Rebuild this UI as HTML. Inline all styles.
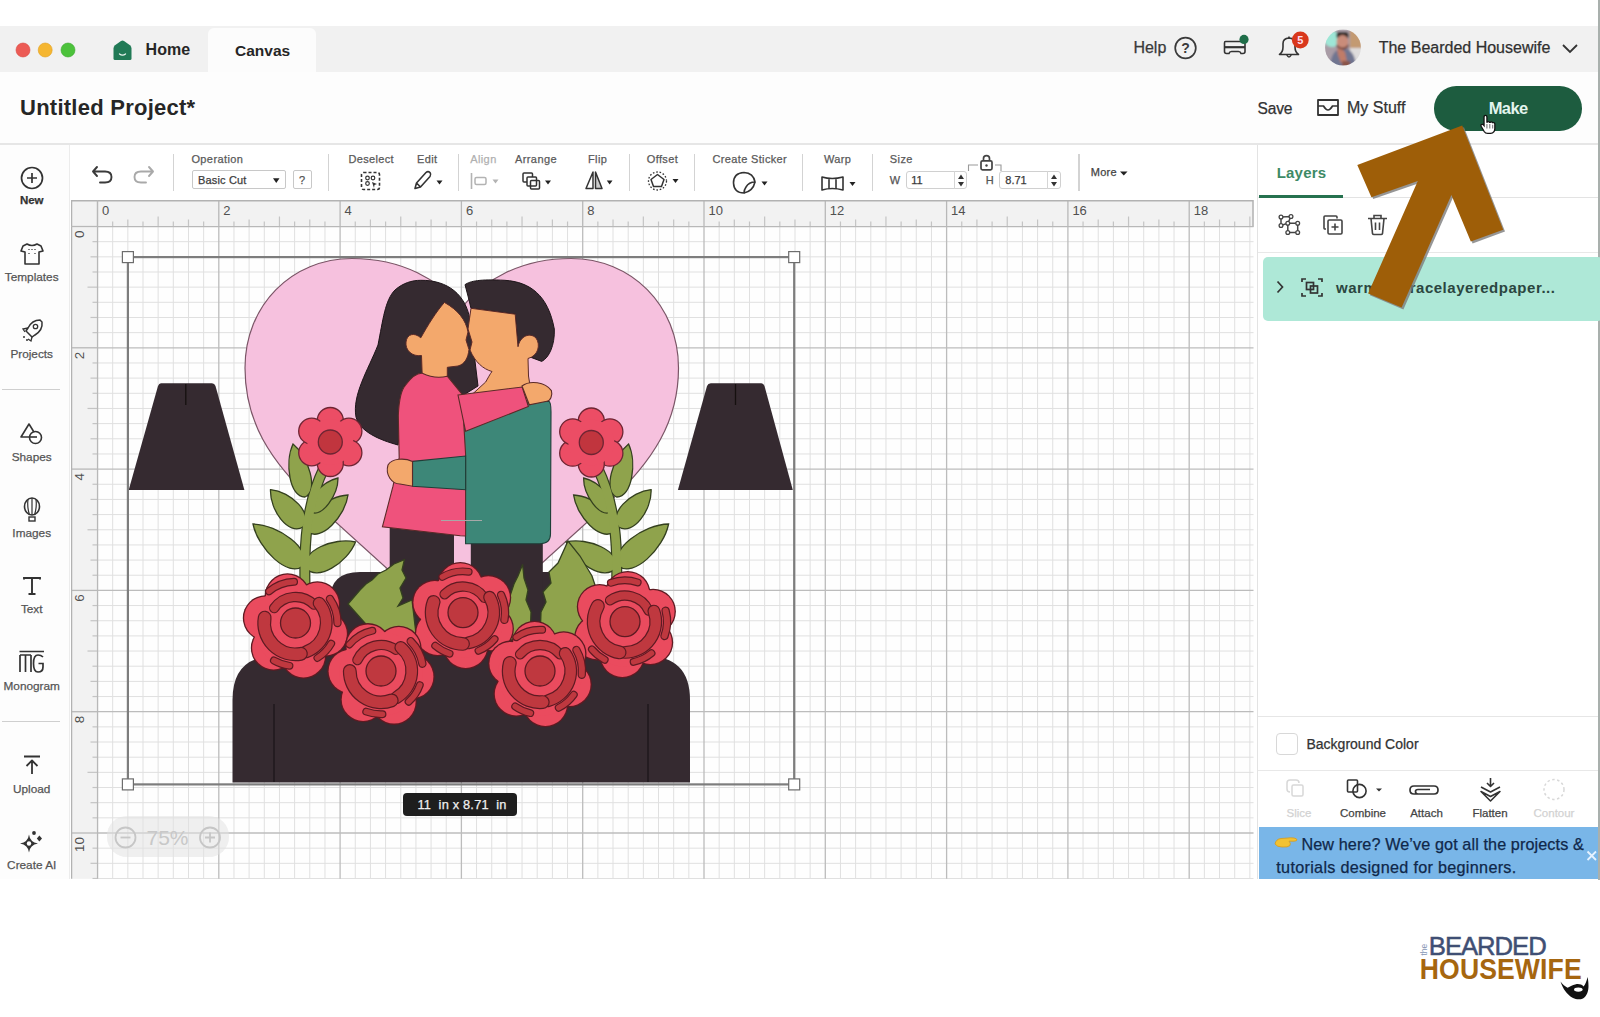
<!DOCTYPE html>
<html><head><meta charset="utf-8">
<style>
*{margin:0;padding:0;box-sizing:border-box}
html,body{width:1600px;height:1017px;overflow:hidden;background:#fff;font-family:"Liberation Sans",sans-serif;color:#2b2b2b}
.a{position:absolute}
#tabbar{left:0;top:26px;width:1598px;height:46px;background:#f1f1f1}
#canvastab{left:208px;top:28px;width:108px;height:44px;background:#fcfcfc;border-radius:6px 6px 0 0}
#header{left:0;top:72px;width:1598px;height:73px;background:#fdfdfd;border-bottom:2px solid #e6e6e6}
#sidebar{left:0;top:145px;width:70px;height:734px;background:#fdfdfd;border-right:1px solid #ececec}
#toolbar{left:71px;top:145px;width:1186px;height:55px;background:#fff}
#rpanel{left:1257px;top:145px;width:341px;height:734px;background:#fff;border-left:1px solid #e3e3e3}
#rightline{left:1598px;top:0;width:2px;height:880px;background:#a9b0ad}
.t{position:absolute;white-space:nowrap;line-height:1;-webkit-text-stroke:0.25px currentColor}
</style></head><body>
<div class="a" id="tabbar"></div>
<div class="a" id="canvastab"></div>
<div class="a" id="header"></div>
<div class="a" id="sidebar"></div>
<div class="a" id="toolbar"></div>
<div class="a" id="rpanel"></div>
<div class="a" id="rightline"></div>

<!-- CANVAS -->
<svg class="a" style="left:71px;top:200px" width="1186" height="679" viewBox="71 200 1186 679" id="canvas">
<rect x="97.5" y="226.5" width="1156.0" height="652.3" fill="#fefefe"/>
<line x1="112.66" y1="226.5" x2="112.66" y2="878.8" stroke="#e0e0e0" stroke-width="1"/>
<line x1="127.83" y1="226.5" x2="127.83" y2="878.8" stroke="#e0e0e0" stroke-width="1"/>
<line x1="142.99" y1="226.5" x2="142.99" y2="878.8" stroke="#e0e0e0" stroke-width="1"/>
<line x1="158.15" y1="226.5" x2="158.15" y2="878.8" stroke="#e0e0e0" stroke-width="1"/>
<line x1="173.31" y1="226.5" x2="173.31" y2="878.8" stroke="#e0e0e0" stroke-width="1"/>
<line x1="188.47" y1="226.5" x2="188.47" y2="878.8" stroke="#e0e0e0" stroke-width="1"/>
<line x1="203.64" y1="226.5" x2="203.64" y2="878.8" stroke="#e0e0e0" stroke-width="1"/>
<line x1="233.96" y1="226.5" x2="233.96" y2="878.8" stroke="#e0e0e0" stroke-width="1"/>
<line x1="249.12" y1="226.5" x2="249.12" y2="878.8" stroke="#e0e0e0" stroke-width="1"/>
<line x1="264.29" y1="226.5" x2="264.29" y2="878.8" stroke="#e0e0e0" stroke-width="1"/>
<line x1="279.45" y1="226.5" x2="279.45" y2="878.8" stroke="#e0e0e0" stroke-width="1"/>
<line x1="294.61" y1="226.5" x2="294.61" y2="878.8" stroke="#e0e0e0" stroke-width="1"/>
<line x1="309.77" y1="226.5" x2="309.77" y2="878.8" stroke="#e0e0e0" stroke-width="1"/>
<line x1="324.94" y1="226.5" x2="324.94" y2="878.8" stroke="#e0e0e0" stroke-width="1"/>
<line x1="355.26" y1="226.5" x2="355.26" y2="878.8" stroke="#e0e0e0" stroke-width="1"/>
<line x1="370.43" y1="226.5" x2="370.43" y2="878.8" stroke="#e0e0e0" stroke-width="1"/>
<line x1="385.59" y1="226.5" x2="385.59" y2="878.8" stroke="#e0e0e0" stroke-width="1"/>
<line x1="400.75" y1="226.5" x2="400.75" y2="878.8" stroke="#e0e0e0" stroke-width="1"/>
<line x1="415.91" y1="226.5" x2="415.91" y2="878.8" stroke="#e0e0e0" stroke-width="1"/>
<line x1="431.07" y1="226.5" x2="431.07" y2="878.8" stroke="#e0e0e0" stroke-width="1"/>
<line x1="446.24" y1="226.5" x2="446.24" y2="878.8" stroke="#e0e0e0" stroke-width="1"/>
<line x1="476.56" y1="226.5" x2="476.56" y2="878.8" stroke="#e0e0e0" stroke-width="1"/>
<line x1="491.72" y1="226.5" x2="491.72" y2="878.8" stroke="#e0e0e0" stroke-width="1"/>
<line x1="506.89" y1="226.5" x2="506.89" y2="878.8" stroke="#e0e0e0" stroke-width="1"/>
<line x1="522.05" y1="226.5" x2="522.05" y2="878.8" stroke="#e0e0e0" stroke-width="1"/>
<line x1="537.21" y1="226.5" x2="537.21" y2="878.8" stroke="#e0e0e0" stroke-width="1"/>
<line x1="552.38" y1="226.5" x2="552.38" y2="878.8" stroke="#e0e0e0" stroke-width="1"/>
<line x1="567.54" y1="226.5" x2="567.54" y2="878.8" stroke="#e0e0e0" stroke-width="1"/>
<line x1="597.86" y1="226.5" x2="597.86" y2="878.8" stroke="#e0e0e0" stroke-width="1"/>
<line x1="613.02" y1="226.5" x2="613.02" y2="878.8" stroke="#e0e0e0" stroke-width="1"/>
<line x1="628.19" y1="226.5" x2="628.19" y2="878.8" stroke="#e0e0e0" stroke-width="1"/>
<line x1="643.35" y1="226.5" x2="643.35" y2="878.8" stroke="#e0e0e0" stroke-width="1"/>
<line x1="658.51" y1="226.5" x2="658.51" y2="878.8" stroke="#e0e0e0" stroke-width="1"/>
<line x1="673.67" y1="226.5" x2="673.67" y2="878.8" stroke="#e0e0e0" stroke-width="1"/>
<line x1="688.84" y1="226.5" x2="688.84" y2="878.8" stroke="#e0e0e0" stroke-width="1"/>
<line x1="719.16" y1="226.5" x2="719.16" y2="878.8" stroke="#e0e0e0" stroke-width="1"/>
<line x1="734.32" y1="226.5" x2="734.32" y2="878.8" stroke="#e0e0e0" stroke-width="1"/>
<line x1="749.49" y1="226.5" x2="749.49" y2="878.8" stroke="#e0e0e0" stroke-width="1"/>
<line x1="764.65" y1="226.5" x2="764.65" y2="878.8" stroke="#e0e0e0" stroke-width="1"/>
<line x1="779.81" y1="226.5" x2="779.81" y2="878.8" stroke="#e0e0e0" stroke-width="1"/>
<line x1="794.98" y1="226.5" x2="794.98" y2="878.8" stroke="#e0e0e0" stroke-width="1"/>
<line x1="810.14" y1="226.5" x2="810.14" y2="878.8" stroke="#e0e0e0" stroke-width="1"/>
<line x1="840.46" y1="226.5" x2="840.46" y2="878.8" stroke="#e0e0e0" stroke-width="1"/>
<line x1="855.62" y1="226.5" x2="855.62" y2="878.8" stroke="#e0e0e0" stroke-width="1"/>
<line x1="870.79" y1="226.5" x2="870.79" y2="878.8" stroke="#e0e0e0" stroke-width="1"/>
<line x1="885.95" y1="226.5" x2="885.95" y2="878.8" stroke="#e0e0e0" stroke-width="1"/>
<line x1="901.11" y1="226.5" x2="901.11" y2="878.8" stroke="#e0e0e0" stroke-width="1"/>
<line x1="916.27" y1="226.5" x2="916.27" y2="878.8" stroke="#e0e0e0" stroke-width="1"/>
<line x1="931.44" y1="226.5" x2="931.44" y2="878.8" stroke="#e0e0e0" stroke-width="1"/>
<line x1="961.76" y1="226.5" x2="961.76" y2="878.8" stroke="#e0e0e0" stroke-width="1"/>
<line x1="976.92" y1="226.5" x2="976.92" y2="878.8" stroke="#e0e0e0" stroke-width="1"/>
<line x1="992.09" y1="226.5" x2="992.09" y2="878.8" stroke="#e0e0e0" stroke-width="1"/>
<line x1="1007.25" y1="226.5" x2="1007.25" y2="878.8" stroke="#e0e0e0" stroke-width="1"/>
<line x1="1022.41" y1="226.5" x2="1022.41" y2="878.8" stroke="#e0e0e0" stroke-width="1"/>
<line x1="1037.57" y1="226.5" x2="1037.57" y2="878.8" stroke="#e0e0e0" stroke-width="1"/>
<line x1="1052.74" y1="226.5" x2="1052.74" y2="878.8" stroke="#e0e0e0" stroke-width="1"/>
<line x1="1083.06" y1="226.5" x2="1083.06" y2="878.8" stroke="#e0e0e0" stroke-width="1"/>
<line x1="1098.22" y1="226.5" x2="1098.22" y2="878.8" stroke="#e0e0e0" stroke-width="1"/>
<line x1="1113.39" y1="226.5" x2="1113.39" y2="878.8" stroke="#e0e0e0" stroke-width="1"/>
<line x1="1128.55" y1="226.5" x2="1128.55" y2="878.8" stroke="#e0e0e0" stroke-width="1"/>
<line x1="1143.71" y1="226.5" x2="1143.71" y2="878.8" stroke="#e0e0e0" stroke-width="1"/>
<line x1="1158.88" y1="226.5" x2="1158.88" y2="878.8" stroke="#e0e0e0" stroke-width="1"/>
<line x1="1174.04" y1="226.5" x2="1174.04" y2="878.8" stroke="#e0e0e0" stroke-width="1"/>
<line x1="1204.36" y1="226.5" x2="1204.36" y2="878.8" stroke="#e0e0e0" stroke-width="1"/>
<line x1="1219.52" y1="226.5" x2="1219.52" y2="878.8" stroke="#e0e0e0" stroke-width="1"/>
<line x1="1234.69" y1="226.5" x2="1234.69" y2="878.8" stroke="#e0e0e0" stroke-width="1"/>
<line x1="1249.85" y1="226.5" x2="1249.85" y2="878.8" stroke="#e0e0e0" stroke-width="1"/>
<line x1="97.5" y1="241.66" x2="1253.5" y2="241.66" stroke="#e0e0e0" stroke-width="1"/>
<line x1="97.5" y1="256.82" x2="1253.5" y2="256.82" stroke="#e0e0e0" stroke-width="1"/>
<line x1="97.5" y1="271.99" x2="1253.5" y2="271.99" stroke="#e0e0e0" stroke-width="1"/>
<line x1="97.5" y1="287.15" x2="1253.5" y2="287.15" stroke="#e0e0e0" stroke-width="1"/>
<line x1="97.5" y1="302.31" x2="1253.5" y2="302.31" stroke="#e0e0e0" stroke-width="1"/>
<line x1="97.5" y1="317.48" x2="1253.5" y2="317.48" stroke="#e0e0e0" stroke-width="1"/>
<line x1="97.5" y1="332.64" x2="1253.5" y2="332.64" stroke="#e0e0e0" stroke-width="1"/>
<line x1="97.5" y1="362.96" x2="1253.5" y2="362.96" stroke="#e0e0e0" stroke-width="1"/>
<line x1="97.5" y1="378.12" x2="1253.5" y2="378.12" stroke="#e0e0e0" stroke-width="1"/>
<line x1="97.5" y1="393.29" x2="1253.5" y2="393.29" stroke="#e0e0e0" stroke-width="1"/>
<line x1="97.5" y1="408.45" x2="1253.5" y2="408.45" stroke="#e0e0e0" stroke-width="1"/>
<line x1="97.5" y1="423.61" x2="1253.5" y2="423.61" stroke="#e0e0e0" stroke-width="1"/>
<line x1="97.5" y1="438.77" x2="1253.5" y2="438.77" stroke="#e0e0e0" stroke-width="1"/>
<line x1="97.5" y1="453.94" x2="1253.5" y2="453.94" stroke="#e0e0e0" stroke-width="1"/>
<line x1="97.5" y1="484.26" x2="1253.5" y2="484.26" stroke="#e0e0e0" stroke-width="1"/>
<line x1="97.5" y1="499.43" x2="1253.5" y2="499.43" stroke="#e0e0e0" stroke-width="1"/>
<line x1="97.5" y1="514.59" x2="1253.5" y2="514.59" stroke="#e0e0e0" stroke-width="1"/>
<line x1="97.5" y1="529.75" x2="1253.5" y2="529.75" stroke="#e0e0e0" stroke-width="1"/>
<line x1="97.5" y1="544.91" x2="1253.5" y2="544.91" stroke="#e0e0e0" stroke-width="1"/>
<line x1="97.5" y1="560.08" x2="1253.5" y2="560.08" stroke="#e0e0e0" stroke-width="1"/>
<line x1="97.5" y1="575.24" x2="1253.5" y2="575.24" stroke="#e0e0e0" stroke-width="1"/>
<line x1="97.5" y1="605.56" x2="1253.5" y2="605.56" stroke="#e0e0e0" stroke-width="1"/>
<line x1="97.5" y1="620.72" x2="1253.5" y2="620.72" stroke="#e0e0e0" stroke-width="1"/>
<line x1="97.5" y1="635.89" x2="1253.5" y2="635.89" stroke="#e0e0e0" stroke-width="1"/>
<line x1="97.5" y1="651.05" x2="1253.5" y2="651.05" stroke="#e0e0e0" stroke-width="1"/>
<line x1="97.5" y1="666.21" x2="1253.5" y2="666.21" stroke="#e0e0e0" stroke-width="1"/>
<line x1="97.5" y1="681.38" x2="1253.5" y2="681.38" stroke="#e0e0e0" stroke-width="1"/>
<line x1="97.5" y1="696.54" x2="1253.5" y2="696.54" stroke="#e0e0e0" stroke-width="1"/>
<line x1="97.5" y1="726.86" x2="1253.5" y2="726.86" stroke="#e0e0e0" stroke-width="1"/>
<line x1="97.5" y1="742.02" x2="1253.5" y2="742.02" stroke="#e0e0e0" stroke-width="1"/>
<line x1="97.5" y1="757.19" x2="1253.5" y2="757.19" stroke="#e0e0e0" stroke-width="1"/>
<line x1="97.5" y1="772.35" x2="1253.5" y2="772.35" stroke="#e0e0e0" stroke-width="1"/>
<line x1="97.5" y1="787.51" x2="1253.5" y2="787.51" stroke="#e0e0e0" stroke-width="1"/>
<line x1="97.5" y1="802.67" x2="1253.5" y2="802.67" stroke="#e0e0e0" stroke-width="1"/>
<line x1="97.5" y1="817.84" x2="1253.5" y2="817.84" stroke="#e0e0e0" stroke-width="1"/>
<line x1="97.5" y1="848.16" x2="1253.5" y2="848.16" stroke="#e0e0e0" stroke-width="1"/>
<line x1="97.5" y1="863.32" x2="1253.5" y2="863.32" stroke="#e0e0e0" stroke-width="1"/>
<line x1="97.5" y1="878.49" x2="1253.5" y2="878.49" stroke="#e0e0e0" stroke-width="1"/>
<line x1="97.50" y1="200" x2="97.50" y2="878.8" stroke="#bcbcbc" stroke-width="1.3"/>
<line x1="218.80" y1="200" x2="218.80" y2="878.8" stroke="#bcbcbc" stroke-width="1.3"/>
<line x1="340.10" y1="200" x2="340.10" y2="878.8" stroke="#bcbcbc" stroke-width="1.3"/>
<line x1="461.40" y1="200" x2="461.40" y2="878.8" stroke="#bcbcbc" stroke-width="1.3"/>
<line x1="582.70" y1="200" x2="582.70" y2="878.8" stroke="#bcbcbc" stroke-width="1.3"/>
<line x1="704.00" y1="200" x2="704.00" y2="878.8" stroke="#bcbcbc" stroke-width="1.3"/>
<line x1="825.30" y1="200" x2="825.30" y2="878.8" stroke="#bcbcbc" stroke-width="1.3"/>
<line x1="946.60" y1="200" x2="946.60" y2="878.8" stroke="#bcbcbc" stroke-width="1.3"/>
<line x1="1067.90" y1="200" x2="1067.90" y2="878.8" stroke="#bcbcbc" stroke-width="1.3"/>
<line x1="1189.20" y1="200" x2="1189.20" y2="878.8" stroke="#bcbcbc" stroke-width="1.3"/>
<line x1="71" y1="226.50" x2="1253.5" y2="226.50" stroke="#bcbcbc" stroke-width="1.3"/>
<line x1="71" y1="347.80" x2="1253.5" y2="347.80" stroke="#bcbcbc" stroke-width="1.3"/>
<line x1="71" y1="469.10" x2="1253.5" y2="469.10" stroke="#bcbcbc" stroke-width="1.3"/>
<line x1="71" y1="590.40" x2="1253.5" y2="590.40" stroke="#bcbcbc" stroke-width="1.3"/>
<line x1="71" y1="711.70" x2="1253.5" y2="711.70" stroke="#bcbcbc" stroke-width="1.3"/>
<line x1="71" y1="833.00" x2="1253.5" y2="833.00" stroke="#bcbcbc" stroke-width="1.3"/>

<rect x="71" y="200" width="1182.5" height="26.5" fill="#f2f2f2"/>
<rect x="71" y="226.5" width="26.5" height="652.3" fill="#f2f2f2"/>
<line x1="97.50" y1="200.5" x2="97.50" y2="226.5" stroke="#b8b8b8" stroke-width="1.3"/>
<text x="102.00" y="214.8" font-size="13" fill="#505050" font-family="Liberation Sans">0</text>
<line x1="112.66" y1="221.5" x2="112.66" y2="226.5" stroke="#c4c4c4" stroke-width="1.2"/>
<line x1="127.83" y1="219.5" x2="127.83" y2="226.5" stroke="#c4c4c4" stroke-width="1.2"/>
<line x1="142.99" y1="221.5" x2="142.99" y2="226.5" stroke="#c4c4c4" stroke-width="1.2"/>
<line x1="158.15" y1="216.5" x2="158.15" y2="226.5" stroke="#c4c4c4" stroke-width="1.2"/>
<line x1="173.31" y1="221.5" x2="173.31" y2="226.5" stroke="#c4c4c4" stroke-width="1.2"/>
<line x1="188.47" y1="219.5" x2="188.47" y2="226.5" stroke="#c4c4c4" stroke-width="1.2"/>
<line x1="203.64" y1="221.5" x2="203.64" y2="226.5" stroke="#c4c4c4" stroke-width="1.2"/>
<line x1="218.80" y1="200.5" x2="218.80" y2="226.5" stroke="#b8b8b8" stroke-width="1.3"/>
<text x="223.30" y="214.8" font-size="13" fill="#505050" font-family="Liberation Sans">2</text>
<line x1="233.96" y1="221.5" x2="233.96" y2="226.5" stroke="#c4c4c4" stroke-width="1.2"/>
<line x1="249.12" y1="219.5" x2="249.12" y2="226.5" stroke="#c4c4c4" stroke-width="1.2"/>
<line x1="264.29" y1="221.5" x2="264.29" y2="226.5" stroke="#c4c4c4" stroke-width="1.2"/>
<line x1="279.45" y1="216.5" x2="279.45" y2="226.5" stroke="#c4c4c4" stroke-width="1.2"/>
<line x1="294.61" y1="221.5" x2="294.61" y2="226.5" stroke="#c4c4c4" stroke-width="1.2"/>
<line x1="309.77" y1="219.5" x2="309.77" y2="226.5" stroke="#c4c4c4" stroke-width="1.2"/>
<line x1="324.94" y1="221.5" x2="324.94" y2="226.5" stroke="#c4c4c4" stroke-width="1.2"/>
<line x1="340.10" y1="200.5" x2="340.10" y2="226.5" stroke="#b8b8b8" stroke-width="1.3"/>
<text x="344.60" y="214.8" font-size="13" fill="#505050" font-family="Liberation Sans">4</text>
<line x1="355.26" y1="221.5" x2="355.26" y2="226.5" stroke="#c4c4c4" stroke-width="1.2"/>
<line x1="370.43" y1="219.5" x2="370.43" y2="226.5" stroke="#c4c4c4" stroke-width="1.2"/>
<line x1="385.59" y1="221.5" x2="385.59" y2="226.5" stroke="#c4c4c4" stroke-width="1.2"/>
<line x1="400.75" y1="216.5" x2="400.75" y2="226.5" stroke="#c4c4c4" stroke-width="1.2"/>
<line x1="415.91" y1="221.5" x2="415.91" y2="226.5" stroke="#c4c4c4" stroke-width="1.2"/>
<line x1="431.07" y1="219.5" x2="431.07" y2="226.5" stroke="#c4c4c4" stroke-width="1.2"/>
<line x1="446.24" y1="221.5" x2="446.24" y2="226.5" stroke="#c4c4c4" stroke-width="1.2"/>
<line x1="461.40" y1="200.5" x2="461.40" y2="226.5" stroke="#b8b8b8" stroke-width="1.3"/>
<text x="465.90" y="214.8" font-size="13" fill="#505050" font-family="Liberation Sans">6</text>
<line x1="476.56" y1="221.5" x2="476.56" y2="226.5" stroke="#c4c4c4" stroke-width="1.2"/>
<line x1="491.72" y1="219.5" x2="491.72" y2="226.5" stroke="#c4c4c4" stroke-width="1.2"/>
<line x1="506.89" y1="221.5" x2="506.89" y2="226.5" stroke="#c4c4c4" stroke-width="1.2"/>
<line x1="522.05" y1="216.5" x2="522.05" y2="226.5" stroke="#c4c4c4" stroke-width="1.2"/>
<line x1="537.21" y1="221.5" x2="537.21" y2="226.5" stroke="#c4c4c4" stroke-width="1.2"/>
<line x1="552.38" y1="219.5" x2="552.38" y2="226.5" stroke="#c4c4c4" stroke-width="1.2"/>
<line x1="567.54" y1="221.5" x2="567.54" y2="226.5" stroke="#c4c4c4" stroke-width="1.2"/>
<line x1="582.70" y1="200.5" x2="582.70" y2="226.5" stroke="#b8b8b8" stroke-width="1.3"/>
<text x="587.20" y="214.8" font-size="13" fill="#505050" font-family="Liberation Sans">8</text>
<line x1="597.86" y1="221.5" x2="597.86" y2="226.5" stroke="#c4c4c4" stroke-width="1.2"/>
<line x1="613.02" y1="219.5" x2="613.02" y2="226.5" stroke="#c4c4c4" stroke-width="1.2"/>
<line x1="628.19" y1="221.5" x2="628.19" y2="226.5" stroke="#c4c4c4" stroke-width="1.2"/>
<line x1="643.35" y1="216.5" x2="643.35" y2="226.5" stroke="#c4c4c4" stroke-width="1.2"/>
<line x1="658.51" y1="221.5" x2="658.51" y2="226.5" stroke="#c4c4c4" stroke-width="1.2"/>
<line x1="673.67" y1="219.5" x2="673.67" y2="226.5" stroke="#c4c4c4" stroke-width="1.2"/>
<line x1="688.84" y1="221.5" x2="688.84" y2="226.5" stroke="#c4c4c4" stroke-width="1.2"/>
<line x1="704.00" y1="200.5" x2="704.00" y2="226.5" stroke="#b8b8b8" stroke-width="1.3"/>
<text x="708.50" y="214.8" font-size="13" fill="#505050" font-family="Liberation Sans">10</text>
<line x1="719.16" y1="221.5" x2="719.16" y2="226.5" stroke="#c4c4c4" stroke-width="1.2"/>
<line x1="734.32" y1="219.5" x2="734.32" y2="226.5" stroke="#c4c4c4" stroke-width="1.2"/>
<line x1="749.49" y1="221.5" x2="749.49" y2="226.5" stroke="#c4c4c4" stroke-width="1.2"/>
<line x1="764.65" y1="216.5" x2="764.65" y2="226.5" stroke="#c4c4c4" stroke-width="1.2"/>
<line x1="779.81" y1="221.5" x2="779.81" y2="226.5" stroke="#c4c4c4" stroke-width="1.2"/>
<line x1="794.98" y1="219.5" x2="794.98" y2="226.5" stroke="#c4c4c4" stroke-width="1.2"/>
<line x1="810.14" y1="221.5" x2="810.14" y2="226.5" stroke="#c4c4c4" stroke-width="1.2"/>
<line x1="825.30" y1="200.5" x2="825.30" y2="226.5" stroke="#b8b8b8" stroke-width="1.3"/>
<text x="829.80" y="214.8" font-size="13" fill="#505050" font-family="Liberation Sans">12</text>
<line x1="840.46" y1="221.5" x2="840.46" y2="226.5" stroke="#c4c4c4" stroke-width="1.2"/>
<line x1="855.62" y1="219.5" x2="855.62" y2="226.5" stroke="#c4c4c4" stroke-width="1.2"/>
<line x1="870.79" y1="221.5" x2="870.79" y2="226.5" stroke="#c4c4c4" stroke-width="1.2"/>
<line x1="885.95" y1="216.5" x2="885.95" y2="226.5" stroke="#c4c4c4" stroke-width="1.2"/>
<line x1="901.11" y1="221.5" x2="901.11" y2="226.5" stroke="#c4c4c4" stroke-width="1.2"/>
<line x1="916.27" y1="219.5" x2="916.27" y2="226.5" stroke="#c4c4c4" stroke-width="1.2"/>
<line x1="931.44" y1="221.5" x2="931.44" y2="226.5" stroke="#c4c4c4" stroke-width="1.2"/>
<line x1="946.60" y1="200.5" x2="946.60" y2="226.5" stroke="#b8b8b8" stroke-width="1.3"/>
<text x="951.10" y="214.8" font-size="13" fill="#505050" font-family="Liberation Sans">14</text>
<line x1="961.76" y1="221.5" x2="961.76" y2="226.5" stroke="#c4c4c4" stroke-width="1.2"/>
<line x1="976.92" y1="219.5" x2="976.92" y2="226.5" stroke="#c4c4c4" stroke-width="1.2"/>
<line x1="992.09" y1="221.5" x2="992.09" y2="226.5" stroke="#c4c4c4" stroke-width="1.2"/>
<line x1="1007.25" y1="216.5" x2="1007.25" y2="226.5" stroke="#c4c4c4" stroke-width="1.2"/>
<line x1="1022.41" y1="221.5" x2="1022.41" y2="226.5" stroke="#c4c4c4" stroke-width="1.2"/>
<line x1="1037.57" y1="219.5" x2="1037.57" y2="226.5" stroke="#c4c4c4" stroke-width="1.2"/>
<line x1="1052.74" y1="221.5" x2="1052.74" y2="226.5" stroke="#c4c4c4" stroke-width="1.2"/>
<line x1="1067.90" y1="200.5" x2="1067.90" y2="226.5" stroke="#b8b8b8" stroke-width="1.3"/>
<text x="1072.40" y="214.8" font-size="13" fill="#505050" font-family="Liberation Sans">16</text>
<line x1="1083.06" y1="221.5" x2="1083.06" y2="226.5" stroke="#c4c4c4" stroke-width="1.2"/>
<line x1="1098.22" y1="219.5" x2="1098.22" y2="226.5" stroke="#c4c4c4" stroke-width="1.2"/>
<line x1="1113.39" y1="221.5" x2="1113.39" y2="226.5" stroke="#c4c4c4" stroke-width="1.2"/>
<line x1="1128.55" y1="216.5" x2="1128.55" y2="226.5" stroke="#c4c4c4" stroke-width="1.2"/>
<line x1="1143.71" y1="221.5" x2="1143.71" y2="226.5" stroke="#c4c4c4" stroke-width="1.2"/>
<line x1="1158.88" y1="219.5" x2="1158.88" y2="226.5" stroke="#c4c4c4" stroke-width="1.2"/>
<line x1="1174.04" y1="221.5" x2="1174.04" y2="226.5" stroke="#c4c4c4" stroke-width="1.2"/>
<line x1="1189.20" y1="200.5" x2="1189.20" y2="226.5" stroke="#b8b8b8" stroke-width="1.3"/>
<text x="1193.70" y="214.8" font-size="13" fill="#505050" font-family="Liberation Sans">18</text>
<line x1="1204.36" y1="221.5" x2="1204.36" y2="226.5" stroke="#c4c4c4" stroke-width="1.2"/>
<line x1="1219.52" y1="219.5" x2="1219.52" y2="226.5" stroke="#c4c4c4" stroke-width="1.2"/>
<line x1="1234.69" y1="221.5" x2="1234.69" y2="226.5" stroke="#c4c4c4" stroke-width="1.2"/>
<line x1="1249.85" y1="216.5" x2="1249.85" y2="226.5" stroke="#c4c4c4" stroke-width="1.2"/>
<line x1="71.5" y1="226.50" x2="97.5" y2="226.50" stroke="#b8b8b8" stroke-width="1.3"/>
<text transform="translate(84.3,230.50) rotate(-90)" text-anchor="end" font-size="13.4" fill="#505050" font-family="Liberation Sans">0</text>
<line x1="92.5" y1="241.66" x2="97.5" y2="241.66" stroke="#c4c4c4" stroke-width="1.2"/>
<line x1="90.5" y1="256.82" x2="97.5" y2="256.82" stroke="#c4c4c4" stroke-width="1.2"/>
<line x1="92.5" y1="271.99" x2="97.5" y2="271.99" stroke="#c4c4c4" stroke-width="1.2"/>
<line x1="87.5" y1="287.15" x2="97.5" y2="287.15" stroke="#c4c4c4" stroke-width="1.2"/>
<line x1="92.5" y1="302.31" x2="97.5" y2="302.31" stroke="#c4c4c4" stroke-width="1.2"/>
<line x1="90.5" y1="317.48" x2="97.5" y2="317.48" stroke="#c4c4c4" stroke-width="1.2"/>
<line x1="92.5" y1="332.64" x2="97.5" y2="332.64" stroke="#c4c4c4" stroke-width="1.2"/>
<line x1="71.5" y1="347.80" x2="97.5" y2="347.80" stroke="#b8b8b8" stroke-width="1.3"/>
<text transform="translate(84.3,351.80) rotate(-90)" text-anchor="end" font-size="13.4" fill="#505050" font-family="Liberation Sans">2</text>
<line x1="92.5" y1="362.96" x2="97.5" y2="362.96" stroke="#c4c4c4" stroke-width="1.2"/>
<line x1="90.5" y1="378.12" x2="97.5" y2="378.12" stroke="#c4c4c4" stroke-width="1.2"/>
<line x1="92.5" y1="393.29" x2="97.5" y2="393.29" stroke="#c4c4c4" stroke-width="1.2"/>
<line x1="87.5" y1="408.45" x2="97.5" y2="408.45" stroke="#c4c4c4" stroke-width="1.2"/>
<line x1="92.5" y1="423.61" x2="97.5" y2="423.61" stroke="#c4c4c4" stroke-width="1.2"/>
<line x1="90.5" y1="438.77" x2="97.5" y2="438.77" stroke="#c4c4c4" stroke-width="1.2"/>
<line x1="92.5" y1="453.94" x2="97.5" y2="453.94" stroke="#c4c4c4" stroke-width="1.2"/>
<line x1="71.5" y1="469.10" x2="97.5" y2="469.10" stroke="#b8b8b8" stroke-width="1.3"/>
<text transform="translate(84.3,473.10) rotate(-90)" text-anchor="end" font-size="13.4" fill="#505050" font-family="Liberation Sans">4</text>
<line x1="92.5" y1="484.26" x2="97.5" y2="484.26" stroke="#c4c4c4" stroke-width="1.2"/>
<line x1="90.5" y1="499.43" x2="97.5" y2="499.43" stroke="#c4c4c4" stroke-width="1.2"/>
<line x1="92.5" y1="514.59" x2="97.5" y2="514.59" stroke="#c4c4c4" stroke-width="1.2"/>
<line x1="87.5" y1="529.75" x2="97.5" y2="529.75" stroke="#c4c4c4" stroke-width="1.2"/>
<line x1="92.5" y1="544.91" x2="97.5" y2="544.91" stroke="#c4c4c4" stroke-width="1.2"/>
<line x1="90.5" y1="560.08" x2="97.5" y2="560.08" stroke="#c4c4c4" stroke-width="1.2"/>
<line x1="92.5" y1="575.24" x2="97.5" y2="575.24" stroke="#c4c4c4" stroke-width="1.2"/>
<line x1="71.5" y1="590.40" x2="97.5" y2="590.40" stroke="#b8b8b8" stroke-width="1.3"/>
<text transform="translate(84.3,594.40) rotate(-90)" text-anchor="end" font-size="13.4" fill="#505050" font-family="Liberation Sans">6</text>
<line x1="92.5" y1="605.56" x2="97.5" y2="605.56" stroke="#c4c4c4" stroke-width="1.2"/>
<line x1="90.5" y1="620.72" x2="97.5" y2="620.72" stroke="#c4c4c4" stroke-width="1.2"/>
<line x1="92.5" y1="635.89" x2="97.5" y2="635.89" stroke="#c4c4c4" stroke-width="1.2"/>
<line x1="87.5" y1="651.05" x2="97.5" y2="651.05" stroke="#c4c4c4" stroke-width="1.2"/>
<line x1="92.5" y1="666.21" x2="97.5" y2="666.21" stroke="#c4c4c4" stroke-width="1.2"/>
<line x1="90.5" y1="681.38" x2="97.5" y2="681.38" stroke="#c4c4c4" stroke-width="1.2"/>
<line x1="92.5" y1="696.54" x2="97.5" y2="696.54" stroke="#c4c4c4" stroke-width="1.2"/>
<line x1="71.5" y1="711.70" x2="97.5" y2="711.70" stroke="#b8b8b8" stroke-width="1.3"/>
<text transform="translate(84.3,715.70) rotate(-90)" text-anchor="end" font-size="13.4" fill="#505050" font-family="Liberation Sans">8</text>
<line x1="92.5" y1="726.86" x2="97.5" y2="726.86" stroke="#c4c4c4" stroke-width="1.2"/>
<line x1="90.5" y1="742.02" x2="97.5" y2="742.02" stroke="#c4c4c4" stroke-width="1.2"/>
<line x1="92.5" y1="757.19" x2="97.5" y2="757.19" stroke="#c4c4c4" stroke-width="1.2"/>
<line x1="87.5" y1="772.35" x2="97.5" y2="772.35" stroke="#c4c4c4" stroke-width="1.2"/>
<line x1="92.5" y1="787.51" x2="97.5" y2="787.51" stroke="#c4c4c4" stroke-width="1.2"/>
<line x1="90.5" y1="802.67" x2="97.5" y2="802.67" stroke="#c4c4c4" stroke-width="1.2"/>
<line x1="92.5" y1="817.84" x2="97.5" y2="817.84" stroke="#c4c4c4" stroke-width="1.2"/>
<line x1="71.5" y1="833.00" x2="97.5" y2="833.00" stroke="#b8b8b8" stroke-width="1.3"/>
<text transform="translate(84.3,837.00) rotate(-90)" text-anchor="end" font-size="13.4" fill="#505050" font-family="Liberation Sans">10</text>
<line x1="92.5" y1="848.16" x2="97.5" y2="848.16" stroke="#c4c4c4" stroke-width="1.2"/>
<line x1="90.5" y1="863.32" x2="97.5" y2="863.32" stroke="#c4c4c4" stroke-width="1.2"/>
<line x1="92.5" y1="878.49" x2="97.5" y2="878.49" stroke="#c4c4c4" stroke-width="1.2"/>
<path d="M71.5 878.8 V200.7 H1253.0 V226.5" fill="none" stroke="#b2b2b2" stroke-width="1.5"/>
<line x1="71" y1="226.5" x2="1253.5" y2="226.5" stroke="#b8b8b8" stroke-width="1.2"/>
<line x1="97.5" y1="200" x2="97.5" y2="878.8" stroke="#b8b8b8" stroke-width="1.2"/>

<path d="M232.5,782.5 V700 Q232.5,656 276,656 L330,656 V600 Q330,572 360,572 L565,572 Q595,572 595,600 V656 L646,656 Q690,656 690,700 V782.5 Z" fill="#352a30"/>
<line x1="274" y1="704" x2="274" y2="782" stroke="#1f181c" stroke-width="1.5"/>
<line x1="648" y1="704" x2="648" y2="782" stroke="#1f181c" stroke-width="1.5"/>
<path d="M161,383.2 L212,383.2 Q214.5,383.2 215.5,386 L244.4,490.1 L128.7,490.1 L158,386 Q159,383.2 161,383.2 Z" fill="#352a30"/>
<line x1="185.8" y1="384" x2="185.8" y2="405" stroke="#15100f" stroke-width="1.3"/>
<path d="M710.8,383.2 L761.3,383.2 Q763.3,383.2 764.5,386 L792.8,490.1 L677.9,490.1 L707,386 Q708,383.2 710.8,383.2 Z" fill="#352a30"/>
<line x1="735.5" y1="384" x2="735.5" y2="405" stroke="#15100f" stroke-width="1.3"/>
<path d="M461.5,636 L318,506 C268,460 245,420 245,368 C245,305 292,258.5 352,258.5 C402,258.5 440,280 461.5,308 C483,280 521,258.5 571,258.5 C631,258.5 678.5,305 678.5,368 C678.5,420 655,460 605,506 Z" fill="#f6c1de" stroke="#7a5566" stroke-width="1.2"/>
<rect x="389.7" y="525" width="64.3" height="120" fill="#352a30"/>
<rect x="470.8" y="535" width="72" height="110" fill="#352a30"/>
<path d="M420.8,280.3 C448,280 466,295 470,320 L478,386 L462,396 L440,380 L405,385 L398,445 C380,440 360,432 356,417 C352,395 368,370 378,345 C383,320 385,300 395,290 C403,283 412,280.3 420.8,280.3 Z" fill="#352a30" stroke="#1d1519" stroke-width="1"/>
<path d="M465,284.7 C470,281 480,279 504.9,280.3 C530,282 548,295 554.3,329 C555,345 549,358 541.7,361.4 L530,357 L518,346.7 L515.2,314.2 L471,308.3 L468,296 Z" fill="#352a30" stroke="#1d1519" stroke-width="1"/>
<path d="M444.4,302.4 C458,310 466,320 468,332 L466,340 L469,349.6 C468,358 465,364 458,366 L447.3,367.3 L447.3,378 L422.3,378 L421.5,355.5 C412,357 405,350 406,342 C407,334 414,332 420.8,337.8 C428,325 436,312 444.4,302.4 Z" fill="#f3a86c" stroke="#5b2a28" stroke-width="1"/>
<path d="M471,308.3 L515.2,314.2 L518,346.7 C520,336 530,332 536,338 C541,345 538,356 528,358.5 L528.5,376 L532,398 L466,400 L485.7,382 C488,378 490,374 492,371.5 C483,369 475,362 470,350 L472,342 L468,329 Z" fill="#f3a86c" stroke="#5b2a28" stroke-width="1"/>
<path d="M463.8,425 L525,402 L548.8,401.2 C551,402 551,408 551,412 L550.5,534 C550.5,540 547,543.7 540,543.7 L465.6,543.7 Z" fill="#3d8778" stroke="#1f3f38" stroke-width="1.1"/>
<path d="M405.4,385.3 C412,376 418,373 422.3,373.2 C430,377 440,378 447.3,376.2 L462,394.2 L465.6,454.3 L465.6,536 L460.3,535.8 L382.4,526.9 L393,486.2 L399.2,457.9 L398.3,415.4 C399,400 401,390 405.4,385.3 Z" fill="#ef527c" stroke="#5b2a28" stroke-width="1.1"/>
<path d="M458,395 L522.2,387 L528.4,406.5 L465.6,431.3 Z" fill="#ef527c" stroke="#5b2a28" stroke-width="1.1"/>
<path d="M522,386 C530,380 545,382 551.4,390.6 C553,396 550,401 547,401.2 L529.3,404.8 Z" fill="#f3a86c" stroke="#5b2a28" stroke-width="1.1"/>
<path d="M412.5,461.4 L465.6,456 L465.6,489.7 L412.5,486.2 Z" fill="#3d8778" stroke="#1f3f38" stroke-width="1.1"/>
<path d="M412.5,461.4 C405,458 392,458 388,465 C385,475 392,484 400,484 L412.5,486.2 Z" fill="#f3a86c" stroke="#5b2a28" stroke-width="1.1"/>
<line x1="441" y1="520.5" x2="482" y2="520.5" stroke="#a8a8a8" stroke-width="1.2"/>
<path d="M305,585 C304,545 306,505 324,468" fill="none" stroke="#34401f" stroke-width="11"/>
<path d="M303.0,566.0 C312.6,549.5 278.1,524.5 253.0,524.0 C257.9,548.7 288.4,578.3 303.0,566.0 Z" fill="#8fa34c" stroke="#34401f" stroke-width="1.3"/>
<path d="M306.0,568.0 C316.6,582.2 347.5,562.8 355.5,542.0 C333.8,536.8 300.3,551.2 306.0,568.0 Z" fill="#8fa34c" stroke="#34401f" stroke-width="1.3"/>
<path d="M303.0,527.0 C314.1,514.1 290.9,491.5 270.5,489.6 C269.6,510.1 288.6,536.2 303.0,527.0 Z" fill="#8fa34c" stroke="#34401f" stroke-width="1.3"/>
<path d="M308.0,532.0 C321.0,542.1 345.3,516.1 348.0,495.0 C326.7,496.1 299.0,518.2 308.0,532.0 Z" fill="#8fa34c" stroke="#34401f" stroke-width="1.3"/>
<path d="M305.0,497.0 C319.0,491.0 308.9,457.1 293.0,444.0 C284.3,462.7 289.8,497.7 305.0,497.0 Z" fill="#8fa34c" stroke="#34401f" stroke-width="1.3"/>
<path d="M311.0,512.0 C322.1,518.1 338.1,494.7 338.0,478.0 C321.7,481.7 302.6,502.5 311.0,512.0 Z" fill="#8fa34c" stroke="#34401f" stroke-width="1.3"/>
<path d="M305,585 C304,545 306,505 324,468" fill="none" stroke="#8fa34c" stroke-width="8.6"/>
<path d="M616.6,585 C617.6,545 615.6,505 597.6,468" fill="none" stroke="#34401f" stroke-width="11"/>
<path d="M618.6,566.0 C633.2,578.3 663.7,548.7 668.6,524.0 C643.5,524.5 609.0,549.5 618.6,566.0 Z" fill="#8fa34c" stroke="#34401f" stroke-width="1.3"/>
<path d="M615.6,568.0 C621.3,551.2 587.8,536.8 566.1,542.0 C574.1,562.8 605.0,582.2 615.6,568.0 Z" fill="#8fa34c" stroke="#34401f" stroke-width="1.3"/>
<path d="M618.6,527.0 C633.0,536.2 652.0,510.1 651.1,489.6 C630.7,491.5 607.5,514.1 618.6,527.0 Z" fill="#8fa34c" stroke="#34401f" stroke-width="1.3"/>
<path d="M613.6,532.0 C622.6,518.2 594.9,496.1 573.6,495.0 C576.3,516.1 600.6,542.1 613.6,532.0 Z" fill="#8fa34c" stroke="#34401f" stroke-width="1.3"/>
<path d="M616.6,497.0 C631.8,497.7 637.3,462.7 628.6,444.0 C612.7,457.1 602.6,491.0 616.6,497.0 Z" fill="#8fa34c" stroke="#34401f" stroke-width="1.3"/>
<path d="M610.6,512.0 C619.0,502.5 599.9,481.7 583.6,478.0 C583.5,494.7 599.5,518.1 610.6,512.0 Z" fill="#8fa34c" stroke="#34401f" stroke-width="1.3"/>
<path d="M616.6,585 C617.6,545 615.6,505 597.6,468" fill="none" stroke="#8fa34c" stroke-width="8.6"/>
<circle cx="330.3" cy="420.5" r="13" fill="#ec4d65" stroke="#6e2533" stroke-width="1.3"/>
<circle cx="348.9" cy="431.2" r="13" fill="#ec4d65" stroke="#6e2533" stroke-width="1.3"/>
<circle cx="348.9" cy="452.8" r="13" fill="#ec4d65" stroke="#6e2533" stroke-width="1.3"/>
<circle cx="330.3" cy="463.5" r="13" fill="#ec4d65" stroke="#6e2533" stroke-width="1.3"/>
<circle cx="311.7" cy="452.8" r="13" fill="#ec4d65" stroke="#6e2533" stroke-width="1.3"/>
<circle cx="311.7" cy="431.2" r="13" fill="#ec4d65" stroke="#6e2533" stroke-width="1.3"/>
<circle cx="330.3" cy="442" r="23" fill="#ec4d65"/>
<circle cx="330.3" cy="442" r="12" fill="#c1353e" stroke="#6e2533" stroke-width="1.3"/>
<circle cx="591.3" cy="421.0" r="13" fill="#ec4d65" stroke="#6e2533" stroke-width="1.3"/>
<circle cx="609.9" cy="431.8" r="13" fill="#ec4d65" stroke="#6e2533" stroke-width="1.3"/>
<circle cx="609.9" cy="453.2" r="13" fill="#ec4d65" stroke="#6e2533" stroke-width="1.3"/>
<circle cx="591.3" cy="464.0" r="13" fill="#ec4d65" stroke="#6e2533" stroke-width="1.3"/>
<circle cx="572.7" cy="453.2" r="13" fill="#ec4d65" stroke="#6e2533" stroke-width="1.3"/>
<circle cx="572.7" cy="431.8" r="13" fill="#ec4d65" stroke="#6e2533" stroke-width="1.3"/>
<circle cx="591.3" cy="442.5" r="23" fill="#ec4d65"/>
<circle cx="591.3" cy="442.5" r="12" fill="#c1353e" stroke="#6e2533" stroke-width="1.3"/>
<path d="M348.0,604.0 L360.0,590.0 L366.0,584.0 L372.0,580.0 L378.0,574.0 L386.0,570.0 L394.0,564.0 L404.4,559.7 L402.0,570.0 L406.0,578.0 L400.0,588.0 L403.0,598.0 L398.0,606.0 L412.0,600.0 L416.0,634.0 L380.0,640.0 Z" fill="#8fa34c" stroke="#34401f" stroke-width="1.3"/>
<path d="M504.0,640.0 L506.0,610.0 L510.0,596.0 L514.0,584.0 L518.0,576.0 L522.6,564.4 L524.0,578.0 L528.0,590.0 L526.0,600.0 L531.0,612.0 L530.0,640.0 Z" fill="#8fa34c" stroke="#34401f" stroke-width="1.3"/>
<path d="M540.0,640.0 L541.0,612.0 L546.0,602.0 L543.0,592.0 L551.0,583.0 L549.0,572.0 L558.0,563.0 L568.0,541.0 L580.0,556.0 L592.0,576.0 L600.0,600.0 L600.0,640.0 Z" fill="#8fa34c" stroke="#34401f" stroke-width="1.3"/>
<circle cx="325.4" cy="634.0" r="22.8" fill="#5e1a22"/>
<circle cx="303.5" cy="655.9" r="22.8" fill="#5e1a22"/>
<circle cx="273.6" cy="647.9" r="22.8" fill="#5e1a22"/>
<circle cx="265.6" cy="618.0" r="22.8" fill="#5e1a22"/>
<circle cx="287.5" cy="596.1" r="22.8" fill="#5e1a22"/>
<circle cx="317.4" cy="604.1" r="22.8" fill="#5e1a22"/>
<circle cx="295.5" cy="626" r="43" fill="#5e1a22"/>
<circle cx="325.4" cy="634.0" r="21.5" fill="#ea4b5e"/>
<circle cx="303.5" cy="655.9" r="21.5" fill="#ea4b5e"/>
<circle cx="273.6" cy="647.9" r="21.5" fill="#ea4b5e"/>
<circle cx="265.6" cy="618.0" r="21.5" fill="#ea4b5e"/>
<circle cx="287.5" cy="596.1" r="21.5" fill="#ea4b5e"/>
<circle cx="317.4" cy="604.1" r="21.5" fill="#ea4b5e"/>
<circle cx="295.5" cy="626" r="42" fill="#ea4b5e"/>
<path d="M274.2,608.1 A26.0,26.0 0 0 1 313.9,604.6" fill="none" stroke="#5e1a22" stroke-width="10.4" stroke-linecap="round"/><path d="M274.2,608.1 A26.0,26.0 0 0 1 313.9,604.6" fill="none" stroke="#bf383f" stroke-width="8.0" stroke-linecap="round"/>
<path d="M319.1,603.2 A30.8,30.8 0 0 1 306.0,651.9" fill="none" stroke="#5e1a22" stroke-width="12.9" stroke-linecap="round"/><path d="M319.1,603.2 A30.8,30.8 0 0 1 306.0,651.9" fill="none" stroke="#bf383f" stroke-width="10.5" stroke-linecap="round"/>
<path d="M300.9,653.8 A31.2,31.2 0 0 1 264.7,617.6" fill="none" stroke="#5e1a22" stroke-width="13.9" stroke-linecap="round"/><path d="M300.9,653.8 A31.2,31.2 0 0 1 264.7,617.6" fill="none" stroke="#bf383f" stroke-width="11.5" stroke-linecap="round"/>
<path d="M269.0,591.4 A41.2,41.2 0 0 1 294.1,581.8" fill="none" stroke="#5e1a22" stroke-width="7.9" stroke-linecap="round"/><path d="M269.0,591.4 A41.2,41.2 0 0 1 294.1,581.8" fill="none" stroke="#bf383f" stroke-width="5.5" stroke-linecap="round"/>
<path d="M329.9,598.9 A42.0,42.0 0 0 1 337.5,623.0" fill="none" stroke="#5e1a22" stroke-width="8.4" stroke-linecap="round"/><path d="M329.9,598.9 A42.0,42.0 0 0 1 337.5,623.0" fill="none" stroke="#bf383f" stroke-width="6.0" stroke-linecap="round"/>
<path d="M331.2,643.6 A41.2,41.2 0 0 1 317.4,658.0" fill="none" stroke="#5e1a22" stroke-width="7.9" stroke-linecap="round"/><path d="M331.2,643.6 A41.2,41.2 0 0 1 317.4,658.0" fill="none" stroke="#bf383f" stroke-width="5.5" stroke-linecap="round"/>
<path d="M289.5,665.8 A43.2,43.2 0 0 1 273.9,660.5" fill="none" stroke="#5e1a22" stroke-width="7.9" stroke-linecap="round"/><path d="M289.5,665.8 A43.2,43.2 0 0 1 273.9,660.5" fill="none" stroke="#bf383f" stroke-width="5.5" stroke-linecap="round"/>
<circle cx="295.5" cy="623" r="15" fill="#bf383f" stroke="#5e1a22" stroke-width="1.3"/>
<circle cx="491.1" cy="628.7" r="22.8" fill="#5e1a22"/>
<circle cx="465.7" cy="646.5" r="22.8" fill="#5e1a22"/>
<circle cx="437.6" cy="633.4" r="22.8" fill="#5e1a22"/>
<circle cx="434.9" cy="602.5" r="22.8" fill="#5e1a22"/>
<circle cx="460.3" cy="584.7" r="22.8" fill="#5e1a22"/>
<circle cx="488.4" cy="597.8" r="22.8" fill="#5e1a22"/>
<circle cx="463" cy="615.6" r="43" fill="#5e1a22"/>
<circle cx="491.1" cy="628.7" r="21.5" fill="#ea4b5e"/>
<circle cx="465.7" cy="646.5" r="21.5" fill="#ea4b5e"/>
<circle cx="437.6" cy="633.4" r="21.5" fill="#ea4b5e"/>
<circle cx="434.9" cy="602.5" r="21.5" fill="#ea4b5e"/>
<circle cx="460.3" cy="584.7" r="21.5" fill="#ea4b5e"/>
<circle cx="488.4" cy="597.8" r="21.5" fill="#ea4b5e"/>
<circle cx="463" cy="615.6" r="42" fill="#ea4b5e"/>
<path d="M444.6,594.2 A26.0,26.0 0 0 1 484.3,597.7" fill="none" stroke="#5e1a22" stroke-width="10.4" stroke-linecap="round"/><path d="M444.6,594.2 A26.0,26.0 0 0 1 484.3,597.7" fill="none" stroke="#bf383f" stroke-width="8.0" stroke-linecap="round"/>
<path d="M489.6,597.2 A30.8,30.8 0 0 1 468.3,642.9" fill="none" stroke="#5e1a22" stroke-width="12.9" stroke-linecap="round"/><path d="M489.6,597.2 A30.8,30.8 0 0 1 468.3,642.9" fill="none" stroke="#bf383f" stroke-width="10.5" stroke-linecap="round"/>
<path d="M463.0,643.9 A31.2,31.2 0 0 1 433.6,601.9" fill="none" stroke="#5e1a22" stroke-width="13.9" stroke-linecap="round"/><path d="M463.0,643.9 A31.2,31.2 0 0 1 433.6,601.9" fill="none" stroke="#bf383f" stroke-width="11.5" stroke-linecap="round"/>
<path d="M442.4,576.9 A41.2,41.2 0 0 1 468.7,571.8" fill="none" stroke="#5e1a22" stroke-width="7.9" stroke-linecap="round"/><path d="M442.4,576.9 A41.2,41.2 0 0 1 468.7,571.8" fill="none" stroke="#bf383f" stroke-width="5.5" stroke-linecap="round"/>
<path d="M501.1,594.9 A42.0,42.0 0 0 1 504.4,619.9" fill="none" stroke="#5e1a22" stroke-width="8.4" stroke-linecap="round"/><path d="M501.1,594.9 A42.0,42.0 0 0 1 504.4,619.9" fill="none" stroke="#bf383f" stroke-width="6.0" stroke-linecap="round"/>
<path d="M494.6,639.1 A41.2,41.2 0 0 1 478.5,650.8" fill="none" stroke="#5e1a22" stroke-width="7.9" stroke-linecap="round"/><path d="M494.6,639.1 A41.2,41.2 0 0 1 478.5,650.8" fill="none" stroke="#bf383f" stroke-width="5.5" stroke-linecap="round"/>
<path d="M449.6,653.7 A43.2,43.2 0 0 1 435.2,645.7" fill="none" stroke="#5e1a22" stroke-width="7.9" stroke-linecap="round"/><path d="M449.6,653.7 A43.2,43.2 0 0 1 435.2,645.7" fill="none" stroke="#bf383f" stroke-width="5.5" stroke-linecap="round"/>
<circle cx="463" cy="612.6" r="15" fill="#bf383f" stroke="#5e1a22" stroke-width="1.3"/>
<circle cx="650.4" cy="642.4" r="22.8" fill="#5e1a22"/>
<circle cx="622.3" cy="655.5" r="22.8" fill="#5e1a22"/>
<circle cx="596.9" cy="637.7" r="22.8" fill="#5e1a22"/>
<circle cx="599.6" cy="606.8" r="22.8" fill="#5e1a22"/>
<circle cx="627.7" cy="593.7" r="22.8" fill="#5e1a22"/>
<circle cx="653.1" cy="611.5" r="22.8" fill="#5e1a22"/>
<circle cx="625" cy="624.6" r="43" fill="#5e1a22"/>
<circle cx="650.4" cy="642.4" r="21.5" fill="#ea4b5e"/>
<circle cx="622.3" cy="655.5" r="21.5" fill="#ea4b5e"/>
<circle cx="596.9" cy="637.7" r="21.5" fill="#ea4b5e"/>
<circle cx="599.6" cy="606.8" r="21.5" fill="#ea4b5e"/>
<circle cx="627.7" cy="593.7" r="21.5" fill="#ea4b5e"/>
<circle cx="653.1" cy="611.5" r="21.5" fill="#ea4b5e"/>
<circle cx="625" cy="624.6" r="42" fill="#ea4b5e"/>
<path d="M610.1,600.3 A26.0,26.0 0 0 1 648.6,610.6" fill="none" stroke="#5e1a22" stroke-width="10.4" stroke-linecap="round"/><path d="M610.1,600.3 A26.0,26.0 0 0 1 648.6,610.6" fill="none" stroke="#bf383f" stroke-width="8.0" stroke-linecap="round"/>
<path d="M653.9,611.1 A30.8,30.8 0 0 1 625.0,652.4" fill="none" stroke="#5e1a22" stroke-width="12.9" stroke-linecap="round"/><path d="M653.9,611.1 A30.8,30.8 0 0 1 625.0,652.4" fill="none" stroke="#bf383f" stroke-width="10.5" stroke-linecap="round"/>
<path d="M619.6,652.4 A31.2,31.2 0 0 1 597.9,606.0" fill="none" stroke="#5e1a22" stroke-width="13.9" stroke-linecap="round"/><path d="M619.6,652.4 A31.2,31.2 0 0 1 597.9,606.0" fill="none" stroke="#bf383f" stroke-width="11.5" stroke-linecap="round"/>
<path d="M610.9,582.8 A41.2,41.2 0 0 1 637.7,582.4" fill="none" stroke="#5e1a22" stroke-width="7.9" stroke-linecap="round"/><path d="M610.9,582.8 A41.2,41.2 0 0 1 637.7,582.4" fill="none" stroke="#bf383f" stroke-width="5.5" stroke-linecap="round"/>
<path d="M665.6,610.7 A42.0,42.0 0 0 1 664.5,636.0" fill="none" stroke="#5e1a22" stroke-width="8.4" stroke-linecap="round"/><path d="M665.6,610.7 A42.0,42.0 0 0 1 664.5,636.0" fill="none" stroke="#bf383f" stroke-width="6.0" stroke-linecap="round"/>
<path d="M651.5,653.2 A41.2,41.2 0 0 1 633.6,661.9" fill="none" stroke="#5e1a22" stroke-width="7.9" stroke-linecap="round"/><path d="M651.5,653.2 A41.2,41.2 0 0 1 633.6,661.9" fill="none" stroke="#bf383f" stroke-width="5.5" stroke-linecap="round"/>
<path d="M604.7,659.8 A43.2,43.2 0 0 1 591.9,649.4" fill="none" stroke="#5e1a22" stroke-width="7.9" stroke-linecap="round"/><path d="M604.7,659.8 A43.2,43.2 0 0 1 591.9,649.4" fill="none" stroke="#bf383f" stroke-width="5.5" stroke-linecap="round"/>
<circle cx="625" cy="621.6" r="15" fill="#bf383f" stroke="#5e1a22" stroke-width="1.3"/>
<circle cx="411.9" cy="676.7" r="22.8" fill="#5e1a22"/>
<circle cx="394.1" cy="702.1" r="22.8" fill="#5e1a22"/>
<circle cx="363.2" cy="699.4" r="22.8" fill="#5e1a22"/>
<circle cx="350.1" cy="671.3" r="22.8" fill="#5e1a22"/>
<circle cx="367.9" cy="645.9" r="22.8" fill="#5e1a22"/>
<circle cx="398.8" cy="648.6" r="22.8" fill="#5e1a22"/>
<circle cx="381" cy="674" r="43" fill="#5e1a22"/>
<circle cx="411.9" cy="676.7" r="21.5" fill="#ea4b5e"/>
<circle cx="394.1" cy="702.1" r="21.5" fill="#ea4b5e"/>
<circle cx="363.2" cy="699.4" r="21.5" fill="#ea4b5e"/>
<circle cx="350.1" cy="671.3" r="21.5" fill="#ea4b5e"/>
<circle cx="367.9" cy="645.9" r="21.5" fill="#ea4b5e"/>
<circle cx="398.8" cy="648.6" r="21.5" fill="#ea4b5e"/>
<circle cx="381" cy="674" r="42" fill="#ea4b5e"/>
<path d="M357.4,660.0 A26.0,26.0 0 0 1 395.9,649.7" fill="none" stroke="#5e1a22" stroke-width="10.4" stroke-linecap="round"/><path d="M357.4,660.0 A26.0,26.0 0 0 1 395.9,649.7" fill="none" stroke="#bf383f" stroke-width="8.0" stroke-linecap="round"/>
<path d="M400.8,647.4 A30.8,30.8 0 0 1 396.4,697.6" fill="none" stroke="#5e1a22" stroke-width="12.9" stroke-linecap="round"/><path d="M400.8,647.4 A30.8,30.8 0 0 1 396.4,697.6" fill="none" stroke="#bf383f" stroke-width="10.5" stroke-linecap="round"/>
<path d="M391.7,700.4 A31.2,31.2 0 0 1 349.8,671.0" fill="none" stroke="#5e1a22" stroke-width="13.9" stroke-linecap="round"/><path d="M391.7,700.4 A31.2,31.2 0 0 1 349.8,671.0" fill="none" stroke="#bf383f" stroke-width="11.5" stroke-linecap="round"/>
<path d="M349.4,644.5 A41.2,41.2 0 0 1 372.4,630.7" fill="none" stroke="#5e1a22" stroke-width="7.9" stroke-linecap="round"/><path d="M349.4,644.5 A41.2,41.2 0 0 1 372.4,630.7" fill="none" stroke="#bf383f" stroke-width="5.5" stroke-linecap="round"/>
<path d="M410.7,641.3 A42.0,42.0 0 0 1 422.4,663.7" fill="none" stroke="#5e1a22" stroke-width="8.4" stroke-linecap="round"/><path d="M410.7,641.3 A42.0,42.0 0 0 1 422.4,663.7" fill="none" stroke="#bf383f" stroke-width="6.0" stroke-linecap="round"/>
<path d="M419.8,685.1 A41.2,41.2 0 0 1 408.6,701.7" fill="none" stroke="#5e1a22" stroke-width="7.9" stroke-linecap="round"/><path d="M419.8,685.1 A41.2,41.2 0 0 1 408.6,701.7" fill="none" stroke="#bf383f" stroke-width="5.5" stroke-linecap="round"/>
<path d="M382.5,714.2 A43.2,43.2 0 0 1 366.2,711.6" fill="none" stroke="#5e1a22" stroke-width="7.9" stroke-linecap="round"/><path d="M382.5,714.2 A43.2,43.2 0 0 1 366.2,711.6" fill="none" stroke="#bf383f" stroke-width="5.5" stroke-linecap="round"/>
<circle cx="381" cy="671" r="15" fill="#bf383f" stroke="#5e1a22" stroke-width="1.3"/>
<circle cx="569.1" cy="684.6" r="22.8" fill="#5e1a22"/>
<circle cx="545.4" cy="704.5" r="22.8" fill="#5e1a22"/>
<circle cx="516.3" cy="693.9" r="22.8" fill="#5e1a22"/>
<circle cx="510.9" cy="663.4" r="22.8" fill="#5e1a22"/>
<circle cx="534.6" cy="643.5" r="22.8" fill="#5e1a22"/>
<circle cx="563.7" cy="654.1" r="22.8" fill="#5e1a22"/>
<circle cx="540" cy="674" r="43" fill="#5e1a22"/>
<circle cx="569.1" cy="684.6" r="21.5" fill="#ea4b5e"/>
<circle cx="545.4" cy="704.5" r="21.5" fill="#ea4b5e"/>
<circle cx="516.3" cy="693.9" r="21.5" fill="#ea4b5e"/>
<circle cx="510.9" cy="663.4" r="21.5" fill="#ea4b5e"/>
<circle cx="534.6" cy="643.5" r="21.5" fill="#ea4b5e"/>
<circle cx="563.7" cy="654.1" r="21.5" fill="#ea4b5e"/>
<circle cx="540" cy="674" r="42" fill="#ea4b5e"/>
<path d="M520.1,654.3 A26.0,26.0 0 0 1 559.9,654.3" fill="none" stroke="#5e1a22" stroke-width="10.4" stroke-linecap="round"/><path d="M520.1,654.3 A26.0,26.0 0 0 1 559.9,654.3" fill="none" stroke="#bf383f" stroke-width="8.0" stroke-linecap="round"/>
<path d="M565.2,653.4 A30.8,30.8 0 0 1 548.0,700.7" fill="none" stroke="#5e1a22" stroke-width="12.9" stroke-linecap="round"/><path d="M565.2,653.4 A30.8,30.8 0 0 1 548.0,700.7" fill="none" stroke="#bf383f" stroke-width="10.5" stroke-linecap="round"/>
<path d="M542.7,702.1 A31.2,31.2 0 0 1 509.8,662.9" fill="none" stroke="#5e1a22" stroke-width="13.9" stroke-linecap="round"/><path d="M542.7,702.1 A31.2,31.2 0 0 1 509.8,662.9" fill="none" stroke="#bf383f" stroke-width="11.5" stroke-linecap="round"/>
<path d="M516.3,637.2 A41.2,41.2 0 0 1 542.2,629.8" fill="none" stroke="#5e1a22" stroke-width="7.9" stroke-linecap="round"/><path d="M516.3,637.2 A41.2,41.2 0 0 1 542.2,629.8" fill="none" stroke="#bf383f" stroke-width="5.5" stroke-linecap="round"/>
<path d="M576.4,650.0 A42.0,42.0 0 0 1 581.8,674.7" fill="none" stroke="#5e1a22" stroke-width="8.4" stroke-linecap="round"/><path d="M576.4,650.0 A42.0,42.0 0 0 1 581.8,674.7" fill="none" stroke="#bf383f" stroke-width="6.0" stroke-linecap="round"/>
<path d="M573.8,694.7 A41.2,41.2 0 0 1 558.7,707.8" fill="none" stroke="#5e1a22" stroke-width="7.9" stroke-linecap="round"/><path d="M573.8,694.7 A41.2,41.2 0 0 1 558.7,707.8" fill="none" stroke="#bf383f" stroke-width="5.5" stroke-linecap="round"/>
<path d="M530.3,713.1 A43.2,43.2 0 0 1 515.2,706.4" fill="none" stroke="#5e1a22" stroke-width="7.9" stroke-linecap="round"/><path d="M530.3,713.1 A43.2,43.2 0 0 1 515.2,706.4" fill="none" stroke="#bf383f" stroke-width="5.5" stroke-linecap="round"/>
<circle cx="540" cy="671" r="15" fill="#bf383f" stroke="#5e1a22" stroke-width="1.3"/>
<rect x="127.9" y="257.1" width="666.3" height="527.3" fill="none" stroke="#7d7d7d" stroke-width="2.2"/>
<rect x="122.4" y="251.60000000000002" width="11" height="11" fill="#fff" stroke="#6d6d6d" stroke-width="1.2"/>
<rect x="788.7" y="251.60000000000002" width="11" height="11" fill="#fff" stroke="#6d6d6d" stroke-width="1.2"/>
<rect x="122.4" y="778.9" width="11" height="11" fill="#fff" stroke="#6d6d6d" stroke-width="1.2"/>
<rect x="788.7" y="778.9" width="11" height="11" fill="#fff" stroke="#6d6d6d" stroke-width="1.2"/>

</svg>
<svg class="a" style="left:0px;top:26px;" width="100" height="46" viewBox="0 0 100 46"><circle cx="23" cy="24" r="7" fill="#ec5b55" stroke="#d9463f" stroke-width="0.6"/><circle cx="45.2" cy="24" r="7" fill="#f5b631" stroke="#e0a020" stroke-width="0.6"/><circle cx="68" cy="24" r="7" fill="#4cc23b" stroke="#39a82c" stroke-width="0.6"/></svg>
<svg class="a" style="left:110px;top:38px;" width="26" height="26" viewBox="0 0 26 26"><path d="M3.5,10.5 Q3.5,8.5 5,7.3 L11,3 Q12.5,2 14,3 L20,7.3 Q21.5,8.5 21.5,10.5 L21.5,20.5 Q21.5,22 20,22 L5,22 Q3.5,22 3.5,20.5 Z" fill="#217a56"/><path d="M9.5,16 Q12.5,18.3 15.5,16" fill="none" stroke="#e8f3ee" stroke-width="1.3" stroke-linecap="round"/></svg>
<div class="t" style="left:145.6px;top:42.46px;font-size:16px;font-weight:700;color:#262626;letter-spacing:0px;-webkit-text-stroke:0;">Home</div>
<div class="t" style="left:235px;top:42.88px;font-size:15.5px;font-weight:700;color:#262626;letter-spacing:0px;-webkit-text-stroke:0;">Canvas</div>
<div class="t" style="left:1133.4px;top:40.26px;font-size:16px;font-weight:400;color:#3a3a3a;letter-spacing:0px;">Help</div>
<svg class="a" style="left:1172px;top:35px;" width="28" height="28" viewBox="0 0 28 28"><circle cx="13.5" cy="13" r="10.3" fill="none" stroke="#3a3a3a" stroke-width="1.7"/><text x="13.5" y="18" text-anchor="middle" font-family="Liberation Sans" font-weight="700" font-size="14" fill="#3a3a3a">?</text></svg>
<svg class="a" style="left:1220px;top:32px;" width="32" height="26" viewBox="0 0 32 26"><path d="M5.5,9.5 H22.5 Q25,9.5 25,12 V19.5 Q25,21.5 23,21.5 H21 Q20.5,19.5 18.5,19.5 H11.5 Q9.5,19.5 9,21.5 H6.5 Q4.5,21.5 4.5,19.5 V11 Q4.5,9.5 5.5,9.5 Z" fill="none" stroke="#333" stroke-width="1.6" stroke-linejoin="round"/><path d="M4.5,15.2 H25" stroke="#333" stroke-width="2.2"/><circle cx="24" cy="7.4" r="4.6" fill="#1f6e49"/></svg>
<svg class="a" style="left:1274px;top:28px;" width="40" height="34" viewBox="0 0 40 34"><path d="M5.5,26.5 Q9,24 9,19 V15.5 Q9,10.5 15,10 Q21,10.5 21,15.5 V19 Q21,24 24.5,26.5 Z" fill="none" stroke="#333" stroke-width="1.6" stroke-linejoin="round"/><path d="M15,10 V8.5" stroke="#333" stroke-width="1.6"/><path d="M12.8,27 Q15,31 17.2,27" fill="none" stroke="#333" stroke-width="1.5"/><circle cx="26.3" cy="12" r="8.4" fill="#d9381c"/><text x="26.3" y="16" text-anchor="middle" font-family="Liberation Sans" font-weight="700" font-size="11" fill="#fde">5</text></svg>
<svg class="a" style="left:1324px;top:29px;" width="38" height="38" viewBox="0 0 38 38"><defs><clipPath id="avc"><circle cx="19" cy="18.5" r="18"/></clipPath><filter id="avb"><feGaussianBlur stdDeviation="0.9"/></filter></defs><g clip-path="url(#avc)"><g filter="url(#avb)"><rect width="38" height="38" fill="#a99ca6"/><ellipse cx="8" cy="10" rx="8" ry="8" fill="#9ee6d6"/><rect x="26" y="0" width="12" height="20" fill="#c39a72"/><rect x="26" y="19" width="12" height="19" fill="#dedcdc"/><path d="M6,38 Q7,20 19,19 Q31,20 32,38 Z" fill="#6f7590"/><rect x="12.5" y="3" width="12" height="7" rx="3" fill="#2d2522"/><ellipse cx="18.5" cy="12.5" rx="6" ry="6.5" fill="#c98c7a"/><path d="M12.5,15 Q18.5,22 24.5,15 V18 Q18.5,24 12.5,18 Z" fill="#7c4b40"/><path d="M13,20 Q17,19 21,23 L23,33 Q20,36 17,34 L14,26 Z" fill="#c07b68"/><rect x="18" y="32" width="8" height="6" fill="#8a5548"/></g></g></svg>
<div class="t" style="left:1378.7px;top:39.76px;font-size:16px;font-weight:400;color:#303030;letter-spacing:0px;">The Bearded Housewife</div>
<svg class="a" style="left:1558px;top:40px;" width="24" height="16" viewBox="0 0 24 16"><path d="M5,5 L12,12 L19,5" fill="none" stroke="#333" stroke-width="1.8"/></svg>
<div class="t" style="left:20px;top:97.38px;font-size:22px;font-weight:700;color:#262626;letter-spacing:0.25px;-webkit-text-stroke:0;">Untitled Project*</div>
<div class="t" style="left:1257.5px;top:100.79px;font-size:15.6px;font-weight:400;color:#333;letter-spacing:-0.2px;">Save</div>
<svg class="a" style="left:1314px;top:96px;" width="28" height="24" viewBox="0 0 28 24"><path d="M4,4 H24 V19 H4 Z" fill="none" stroke="#333" stroke-width="1.8" stroke-linejoin="round"/><path d="M4,10 H9.5 Q12,14 14,14 Q16,14 18.5,10 H24" fill="none" stroke="#333" stroke-width="1.7"/></svg>
<div class="t" style="left:1347px;top:100.46px;font-size:16px;font-weight:400;color:#333;letter-spacing:0px;">My Stuff</div>
<div class="a" style="left:1433.8px;top:86px;width:148px;height:44.6px;border-radius:22.3px;background:#1d5c3f"></div>
<div class="t" style="left:1488.7px;top:100.13px;font-size:16.5px;font-weight:700;color:#e3f5ee;letter-spacing:-0.6px;-webkit-text-stroke:0;">Make</div>
<svg class="a" style="left:1479px;top:114px;" width="22" height="24" viewBox="0 0 22 24"><g transform="scale(0.72)"><path d="M7,4 Q7,2 9,2 Q11,2 11,4 V12 Q11,10.5 13,10.5 Q15,10.5 15,12.5 Q15,11 17,11 Q19,11 19,13 Q19,12 20.5,12 Q22,12 22,14 V20 Q22,26 16,27 H12 Q9,27 7,24 L3,17 Q2,15 4,14.5 Q5.5,14 7,16 Z" fill="#fff" stroke="#111" stroke-width="1.8"/><path d="M11,14 V20 M15,14 V20 M19,15 V20" stroke="#777" stroke-width="1.5"/></g></svg>
<div class="a" style="left:172.95px;top:154px;width:1.5px;height:37px;background:#d3d3d3"></div>
<div class="a" style="left:327.75px;top:154px;width:1.5px;height:37px;background:#d3d3d3"></div>
<div class="a" style="left:457.95px;top:154px;width:1.5px;height:37px;background:#d3d3d3"></div>
<div class="a" style="left:628.85px;top:154px;width:1.5px;height:37px;background:#d3d3d3"></div>
<div class="a" style="left:693.85px;top:154px;width:1.5px;height:37px;background:#d3d3d3"></div>
<div class="a" style="left:801.65px;top:154px;width:1.5px;height:37px;background:#d3d3d3"></div>
<div class="a" style="left:871.85px;top:154px;width:1.5px;height:37px;background:#d3d3d3"></div>
<div class="a" style="left:1078.05px;top:154px;width:1.5px;height:37px;background:#d3d3d3"></div>
<svg class="a" style="left:88px;top:162px;" width="70" height="26" viewBox="0 0 70 26"><path d="M9,5 L5,9.5 L9,14 M5,9.5 H17 Q23.5,9.5 23.5,15 Q23.5,20.5 17,20.5 H12" fill="none" stroke="#3a3a3a" stroke-width="1.9" stroke-linecap="round" stroke-linejoin="round"/><path d="M61,5 L65,9.5 L61,14 M65,9.5 H53 Q46.5,9.5 46.5,15 Q46.5,20.5 53,20.5 H58" fill="none" stroke="#a9a9a9" stroke-width="1.9" stroke-linecap="round" stroke-linejoin="round"/></svg>
<div class="t" style="left:191.4px;top:153.79px;font-size:11px;font-weight:400;color:#5a5a5a;letter-spacing:0.4px;">Operation</div>
<div class="a" style="left:191.6px;top:170.3px;width:94.4px;height:19px;border:1px solid #c8c8c8;border-radius:2px;background:#fff"></div>
<div class="t" style="left:198.1px;top:174.89px;font-size:11px;font-weight:400;color:#3d3d3d;letter-spacing:0.15px;">Basic Cut</div>
<svg class="a" style="left:270px;top:176px;" width="12" height="10" viewBox="0 0 12 10"><path d="M3,2.3 H9.5 L6.25,7 Z" fill="#222"/></svg>
<div class="a" style="left:292.6px;top:170.3px;width:19.6px;height:19px;border:1px solid #c8c8c8;border-radius:2px;background:#fff"></div>
<div class="t" style="left:299px;top:174.89px;font-size:11px;font-weight:400;color:#555;letter-spacing:0px;">?</div>
<div class="t" style="left:348.6px;top:153.79px;font-size:11px;font-weight:400;color:#5a5a5a;letter-spacing:0.3px;">Deselect</div>
<svg class="a" style="left:358px;top:169px;" width="26" height="24" viewBox="0 0 26 24"><rect x="3.5" y="3.5" width="18" height="17" rx="2" fill="none" stroke="#333" stroke-width="1.6" stroke-dasharray="3,2"/><circle cx="9.5" cy="9" r="1.8" fill="none" stroke="#333" stroke-width="1.2"/><circle cx="15" cy="9" r="1.8" fill="none" stroke="#333" stroke-width="1.2"/><circle cx="9.5" cy="14.5" r="1.8" fill="none" stroke="#333" stroke-width="1.2"/><path d="M14,13 L19,15 L16.5,16 L16,19 Z" fill="#333"/></svg>
<div class="t" style="left:416.9px;top:153.79px;font-size:11px;font-weight:400;color:#5a5a5a;letter-spacing:0.4px;">Edit</div>
<svg class="a" style="left:410px;top:168px;" width="36" height="24" viewBox="0 0 36 24"><path d="M5,20.5 L6.5,15 L16,4.5 Q18,2.8 20,4.5 Q21.5,6.5 20,8.5 L10.5,19 Z M6.5,15 L10.5,19" fill="none" stroke="#333" stroke-width="1.6" stroke-linejoin="round"/><path d="M26.5,12.5 H32.5 L29.5,16.5 Z" fill="#222"/></svg>
<div class="t" style="left:470.2px;top:153.79px;font-size:11px;font-weight:400;color:#b0b0b0;letter-spacing:0.4px;">Align</div>
<svg class="a" style="left:468px;top:170px;" width="34" height="22" viewBox="0 0 34 22"><path d="M3.5,3 V19" stroke="#b3b3b3" stroke-width="1.6"/><rect x="7" y="7.5" width="11" height="7" rx="1.5" fill="none" stroke="#b3b3b3" stroke-width="1.5"/><path d="M24.5,9.5 H30.5 L27.5,13.5 Z" fill="#b3b3b3"/></svg>
<div class="t" style="left:515px;top:153.79px;font-size:11px;font-weight:400;color:#5a5a5a;letter-spacing:0.4px;">Arrange</div>
<svg class="a" style="left:519px;top:169px;" width="36" height="24" viewBox="0 0 36 24"><rect x="4" y="4" width="9.5" height="9" rx="1" fill="none" stroke="#333" stroke-width="1.5"/><rect x="8" y="8" width="9.5" height="9" rx="1" fill="#fff" stroke="#333" stroke-width="1.5"/><rect x="11.5" y="11.5" width="9" height="8.5" rx="1" fill="none" stroke="#333" stroke-width="1.5"/><path d="M26,11.5 H32 L29,15.5 Z" fill="#222"/></svg>
<div class="t" style="left:588px;top:153.79px;font-size:11px;font-weight:400;color:#5a5a5a;letter-spacing:0.4px;">Flip</div>
<svg class="a" style="left:582px;top:168px;" width="34" height="24" viewBox="0 0 34 24"><path d="M11,4 L4,20.5 H11 Z M13.5,4 L20,20.5 H13.5 Z" fill="none" stroke="#333" stroke-width="1.5" stroke-linejoin="round"/><path d="M13.5,4 L20,20.5 H13.5 Z" fill="#333" opacity="0.25"/><path d="M24.8,12.5 H30.5 L27.6,16.5 Z" fill="#222"/></svg>
<div class="t" style="left:646.7px;top:153.79px;font-size:11px;font-weight:400;color:#5a5a5a;letter-spacing:0.4px;">Offset</div>
<svg class="a" style="left:645px;top:168px;" width="36" height="25" viewBox="0 0 36 25"><path d="M12.5,6.5 L19,11.5 L16.5,18.5 H8.5 L6,11.5 Z" fill="none" stroke="#333" stroke-width="1.5" stroke-linejoin="round"/><circle cx="12.5" cy="13" r="9" fill="none" stroke="#333" stroke-width="1.3" stroke-dasharray="1.6,1.8"/><path d="M27.5,11 H33.5 L30.5,15 Z" fill="#222"/></svg>
<div class="t" style="left:712.5px;top:153.79px;font-size:11px;font-weight:400;color:#5a5a5a;letter-spacing:0.35px;">Create Sticker</div>
<svg class="a" style="left:729px;top:168px;" width="42" height="28" viewBox="0 0 42 28"><path d="M15,25 Q5,25 4.5,15 Q4.5,5 15,4.5 Q24.5,5 26,14 Q20,14 17,19 Q15,22 15,25 Z" fill="none" stroke="#333" stroke-width="1.6" stroke-linejoin="round"/><path d="M15,25 Q24,23 26,14" fill="none" stroke="#333" stroke-width="1.6"/><path d="M32.5,13.5 H38.5 L35.5,17.5 Z" fill="#222"/></svg>
<div class="t" style="left:823.9px;top:153.79px;font-size:11px;font-weight:400;color:#5a5a5a;letter-spacing:0.4px;">Warp</div>
<svg class="a" style="left:818px;top:172px;" width="40" height="22" viewBox="0 0 40 22"><path d="M4,5 Q14,8 25,5 V18 Q14,15 4,18 Z M4,5 V18 M11,6.3 V16.7 M18,6.3 V16.7 M25,5 V18" fill="none" stroke="#333" stroke-width="1.6" stroke-linejoin="round"/><path d="M31.5,10 H37.5 L34.5,14 Z" fill="#222"/></svg>
<div class="t" style="left:889.8px;top:153.79px;font-size:11px;font-weight:400;color:#5a5a5a;letter-spacing:0.4px;">Size</div>
<div class="t" style="left:889.8px;top:174.99px;font-size:11px;font-weight:400;color:#555;letter-spacing:0.3px;">W</div>
<div class="a" style="left:905.6px;top:170.5px;width:61.8px;height:18.8px;border:1px solid #d0d0d0;border-radius:3px;background:#fff"></div>
<div class="a" style="left:954px;top:171px;width:1px;height:18px;background:#d5d5d5"></div>
<div class="t" style="left:911.3px;top:175.19px;font-size:11px;font-weight:400;color:#3a3a3a;letter-spacing:0px;">11</div>
<svg class="a" style="left:955px;top:171px;" width="12" height="19" viewBox="0 0 12 19"><path d="M3,8 L6,3.5 L9,8 Z M3,11 L6,15.5 L9,11 Z" fill="#333"/></svg>
<svg class="a" style="left:966px;top:153px;" width="62" height="20" viewBox="0 0 62 20"><path d="M2.5,18 V12 H12 M35,18 V12 H29" fill="none" stroke="#9a9a9a" stroke-width="1.1"/><rect x="15" y="7.8" width="11" height="9" rx="1.5" fill="none" stroke="#444" stroke-width="1.7"/><path d="M17.5,7.8 V5.5 Q17.5,2.6 20.5,2.6 Q23.5,2.6 23.5,5.5 V7.8" fill="none" stroke="#444" stroke-width="1.7"/><circle cx="20.5" cy="12.5" r="1.2" fill="#444"/></svg>
<div class="t" style="left:985.8px;top:174.99px;font-size:11px;font-weight:400;color:#555;letter-spacing:0.3px;">H</div>
<div class="a" style="left:999px;top:170.5px;width:61.9px;height:18.8px;border:1px solid #d0d0d0;border-radius:3px;background:#fff"></div>
<div class="a" style="left:1047px;top:171px;width:1px;height:18px;background:#d5d5d5"></div>
<div class="t" style="left:1005.3px;top:175.19px;font-size:11px;font-weight:400;color:#3a3a3a;letter-spacing:0px;">8.71</div>
<svg class="a" style="left:1048px;top:171px;" width="12" height="19" viewBox="0 0 12 19"><path d="M3,8 L6,3.5 L9,8 Z M3,11 L6,15.5 L9,11 Z" fill="#333"/></svg>
<div class="t" style="left:1090.7px;top:167.39px;font-size:11px;font-weight:400;color:#444;letter-spacing:0.3px;">More</div>
<svg class="a" style="left:1117px;top:168px;" width="14" height="10" viewBox="0 0 14 10"><path d="M3,3.5 H10.5 L6.75,7.5 Z" fill="#222"/></svg>
<svg class="a" style="left:18px;top:165px;" width="28" height="28" viewBox="0 0 28 28"><circle cx="14" cy="13" r="10.5" fill="none" stroke="#333" stroke-width="1.7"/><path d="M14,8 V18 M9,13 H19" stroke="#333" stroke-width="1.7"/></svg>
<div class="t" style="left:-8.3px;width:80px;text-align:center;top:194.57px;font-size:11.5px;font-weight:700;color:#333">New</div>
<svg class="a" style="left:18px;top:240px;" width="28" height="28" viewBox="0 0 28 28"><path d="M9,4 L5,6 L3,11 L7,12 V24 H21 V12 L25,11 L23,6 L19,4 Q14,7 9,4 Z" fill="none" stroke="#333" stroke-width="1.6" stroke-linejoin="round"/><path d="M11,9 V10 M14,9 V10 M17,9 V10 M11,13 V14 M17,13 V14" stroke="#333" stroke-width="1.2"/></svg>
<div class="t" style="left:-8.3px;width:80px;text-align:center;top:272.01px;font-size:11.8px;font-weight:400;color:#555">Templates</div>
<svg class="a" style="left:18px;top:316px;" width="28" height="28" viewBox="0 0 28 28"><path d="M22,4 Q14,4 10,12 L8,15 L14,21 L17,19 Q25,14 24,6 Z" fill="none" stroke="#333" stroke-width="1.5"/><circle cx="17.5" cy="10.5" r="2.2" fill="none" stroke="#333" stroke-width="1.3"/><path d="M10,12 L5,13 L7,16 M14,21 L13,25 L10,23" fill="none" stroke="#333" stroke-width="1.3"/><circle cx="6" cy="21" r="1" fill="#333"/><circle cx="9" cy="24" r="1" fill="#333"/></svg>
<div class="t" style="left:-8.3px;width:80px;text-align:center;top:348.71px;font-size:11.8px;font-weight:400;color:#555">Projects</div>
<div class="a" style="left:2px;top:389px;width:58px;height:1px;background:#cfcfcf"></div>
<svg class="a" style="left:18px;top:420px;" width="28" height="28" viewBox="0 0 28 28"><path d="M11,4 L3,17 H19 Z" fill="none" stroke="#333" stroke-width="1.6" stroke-linejoin="round"/><circle cx="17.5" cy="17.5" r="6" fill="#fff" stroke="#333" stroke-width="1.6"/><path d="M12,17 H19" stroke="#333" stroke-width="1.6"/></svg>
<div class="t" style="left:-8.3px;width:80px;text-align:center;top:451.51px;font-size:11.8px;font-weight:400;color:#555">Shapes</div>
<svg class="a" style="left:18px;top:496px;" width="28" height="28" viewBox="0 0 28 28"><ellipse cx="14" cy="10.5" rx="7.5" ry="8.5" fill="none" stroke="#333" stroke-width="1.6"/><path d="M14,2 V19 M10,3.5 Q9,11 11.5,19 M18,3.5 Q19,11 16.5,19" fill="none" stroke="#333" stroke-width="1.2"/><rect x="11" y="21" width="6" height="4" fill="none" stroke="#333" stroke-width="1.4"/></svg>
<div class="t" style="left:-8.3px;width:80px;text-align:center;top:528.01px;font-size:11.8px;font-weight:400;color:#555">Images</div>
<svg class="a" style="left:18px;top:574px;" width="28" height="28" viewBox="0 0 28 28"><path d="M6,5.5 V4 H22 V5.5 M14,4 V20 M10.5,20 H17.5" fill="none" stroke="#333" stroke-width="1.9"/></svg>
<div class="t" style="left:-8.3px;width:80px;text-align:center;top:604.01px;font-size:11.8px;font-weight:400;color:#555">Text</div>
<svg class="a" style="left:16px;top:648px;" width="32" height="30" viewBox="0 0 32 30"><path d="M3.5,3.5 H28 M4,7 V24 M4,7 H15 M9.5,7 V24 M15,7 V24" fill="none" stroke="#333" stroke-width="1.7"/><path d="M27,9 Q25,7 22,7 Q17.5,7 17.5,15.5 Q17.5,24 22,24 Q27,24 27,19 V15.5 H22.5" fill="none" stroke="#333" stroke-width="1.7"/></svg>
<div class="t" style="left:-8.3px;width:80px;text-align:center;top:680.61px;font-size:11.8px;font-weight:400;color:#555">Monogram</div>
<div class="a" style="left:2px;top:721px;width:58px;height:1px;background:#cfcfcf"></div>
<svg class="a" style="left:18px;top:752px;" width="28" height="28" viewBox="0 0 28 28"><path d="M6,4.5 H22 M14,22 V9 M8.5,14 L14,8.5 L19.5,14" fill="none" stroke="#333" stroke-width="1.8" stroke-linejoin="round"/></svg>
<div class="t" style="left:-8.3px;width:80px;text-align:center;top:784.01px;font-size:11.8px;font-weight:400;color:#555">Upload</div>
<svg class="a" style="left:16px;top:826px;" width="32" height="30" viewBox="0 0 32 30"><path d="M13,8.5 Q13.9,16.1 22,17.5 Q13.9,18.9 13,26.5 Q12.1,18.9 4,17.5 Q12.1,16.1 13,8.5 Z" fill="#333"/><circle cx="13" cy="17.5" r="2.2" fill="#fff"/><circle cx="18" cy="7" r="1.9" fill="#333"/><path d="M23.4,9.5 L26,12.5 L23.4,15.5 L20.8,12.5 Z" fill="#333"/></svg>
<div class="t" style="left:-8.3px;width:80px;text-align:center;top:860.01px;font-size:11.8px;font-weight:400;color:#555">Create AI</div>
<div class="a" style="left:107px;top:816px;width:122px;height:41px;border-radius:20px;background:rgba(225,225,225,0.55)"></div>
<svg class="a" style="left:107px;top:816px;" width="122" height="41" viewBox="0 0 122 41"><circle cx="18.5" cy="21.5" r="10" fill="none" stroke="#c6c6c6" stroke-width="1.8"/><path d="M13.5,21.5 H23.5" stroke="#c6c6c6" stroke-width="1.8"/><circle cx="103" cy="21.5" r="10" fill="none" stroke="#c6c6c6" stroke-width="1.8"/><path d="M98,21.5 H108 M103,16.5 V26.5" stroke="#c6c6c6" stroke-width="1.8"/><text x="60.5" y="29" text-anchor="middle" font-family="Liberation Sans" font-size="21" fill="#c8c8c8">75%</text></svg>
<div class="a" style="left:403px;top:793px;width:114px;height:23px;border-radius:4px;background:#1e1e1e"></div>
<div class="t" style="left:417.4px;top:798.56px;font-size:12.8px;font-weight:400;color:#f0f0f0;letter-spacing:0.2px;">11&nbsp; in x 8.71&nbsp; in</div>
<div class="t" style="left:1276.7px;top:164.50px;font-size:15px;font-weight:700;color:#3d8a66;letter-spacing:0.2px;-webkit-text-stroke:0;">Layers</div>
<div class="a" style="left:1258px;top:196.6px;width:340px;height:1.3px;background:#e3e3e3"></div>
<div class="a" style="left:1258.7px;top:194.7px;width:84.5px;height:3.5px;background:#26714f"></div>
<svg class="a" style="left:1275px;top:210px;" width="120" height="30" viewBox="0 0 120 30"><g fill="none" stroke="#444" stroke-width="1.5"><path d="M6,7 L16,6.5 L12.8,13.2 L6,15.5 Z M12.8,13.2 H22.7 V22.5 H12.8 Z"/></g><g fill="#fff" stroke="#444" stroke-width="1.3"><circle cx="6" cy="7" r="1.9"/><circle cx="16" cy="6.5" r="1.9"/><circle cx="6" cy="15.5" r="1.9"/><circle cx="12.8" cy="13.2" r="1.9"/><circle cx="22.7" cy="13.2" r="1.9"/><circle cx="12.8" cy="22.5" r="1.9"/><circle cx="22.7" cy="22.5" r="1.9"/></g><g fill="none" stroke="#444" stroke-width="1.6"><path d="M51,19 H49.5 Q49,19 49,18 V7 Q49,6 50,6 H61 Q62,6 62,7 V8.5"/><rect x="53" y="10" width="14" height="14" rx="1.2"/><path d="M60,13.5 V20.5 M56.5,17 H63.5"/></g><g fill="none" stroke="#444" stroke-width="1.6"><path d="M93,8.5 H112 M96,8.5 L97.5,23.5 Q97.8,24.5 99,24.5 H106 Q107.2,24.5 107.5,23.5 L109,8.5 M99,8.5 V5.5 H106 V8.5 M100.5,12.5 V20 M104.5,12.5 V20"/></g></svg>
<div class="a" style="left:1258px;top:252.2px;width:340px;height:1.3px;background:#e8e8e8"></div>
<div class="a" style="left:1263px;top:257px;width:340px;height:63.5px;border-radius:5px;background:#aee8d7"></div>
<svg class="a" style="left:1272px;top:276px;" width="56" height="26" viewBox="0 0 56 26"><path d="M5.5,5.5 L10.5,11 L5.5,16.5" fill="none" stroke="#333" stroke-width="1.7"/><g fill="none" stroke="#333" stroke-width="1.7"><path d="M30,6 V3 H34 M46,3 H50 V6 M50,17 V20 H46 M34,20 H30 V17"/><rect x="34.5" y="6.5" width="7" height="7"/><rect x="38.5" y="10" width="7" height="7"/></g></svg>
<div class="t" style="left:1336px;top:280.10px;font-size:15px;font-weight:700;color:#2b4640;letter-spacing:0.52px;-webkit-text-stroke:0;">warmembracelayeredpaper...</div>
<div class="a" style="left:1258px;top:716px;width:340px;height:1.3px;background:#e6e6e6"></div>
<div class="a" style="left:1275.5px;top:732.5px;width:22px;height:22px;border:1.2px solid #d8d8d8;border-radius:4px;background:#fff"></div>
<div class="t" style="left:1306.5px;top:737.15px;font-size:14px;font-weight:400;color:#333;letter-spacing:0px;">Background Color</div>
<div class="a" style="left:1258px;top:770px;width:340px;height:1.3px;background:#e8e8e8"></div>
<svg class="a" style="left:1280px;top:774px;" width="300" height="30" viewBox="0 0 300 30"><g fill="none" stroke="#d8d8d8" stroke-width="1.5"><rect x="12" y="11" width="11" height="11" rx="1.5"/><path d="M10,18 Q7,18 7,15 V9 Q7,6 10,6 H16 Q19,6 19,9"/></g><g fill="none" stroke="#333" stroke-width="1.6"><rect x="67.5" y="6" width="10" height="12" rx="1"/><circle cx="79.5" cy="17" r="6.6"/></g><path d="M96,14.5 H102 L99,17.5 Z" fill="#333"/><g fill="none" stroke="#333" stroke-width="1.7"><path d="M145,20 H134 Q130,20 130,16 Q130,12 134,12 H154 Q158,12 158,16 Q158,20 154,20 H138 Q135.5,20 135.5,17.5 Q135.5,15.5 138,15.5 H150"/></g><g fill="none" stroke="#333" stroke-width="1.6" stroke-linejoin="round"><path d="M210.5,4 V12 M207,9 L210.5,12.5 L214,9"/><path d="M201,13 L210.5,18 L220,13 M201,17.5 L210.5,22.5 L220,17.5 L210.5,27 Z"/></g><circle cx="274" cy="15.5" r="10" fill="none" stroke="#d8d8d8" stroke-width="1.5" stroke-dasharray="2.5,2.5"/></svg>
<div class="t" style="left:1259px;width:80px;text-align:center;top:808.27px;font-size:11.5px;color:#d2d2d2">Slice</div>
<div class="t" style="left:1323px;width:80px;text-align:center;top:808.27px;font-size:11.5px;color:#444">Combine</div>
<div class="t" style="left:1386.5px;width:80px;text-align:center;top:808.27px;font-size:11.5px;color:#444">Attach</div>
<div class="t" style="left:1450px;width:80px;text-align:center;top:808.27px;font-size:11.5px;color:#444">Flatten</div>
<div class="t" style="left:1514px;width:80px;text-align:center;top:808.27px;font-size:11.5px;color:#d2d2d2">Contour</div>
<div class="a" style="left:1259px;top:826.5px;width:339px;height:52.3px;background:#79b6e8"></div>
<svg class="a" style="left:1272px;top:832px;" width="30" height="20" viewBox="0 0 30 20"><path d="M3,12 Q4,7 9,6.5 L16,6 Q18,5.5 22,6 Q25,6.5 25,8 Q25,9 22,9.2 H17 Q19,11 18,13.5 Q16,15.5 10,15 Q5,15 3,12 Z" fill="#f2c232" stroke="#d79a1a" stroke-width="0.8"/></svg>
<div class="t" style="left:1301.4px;top:836.29px;font-size:16.2px;font-weight:400;color:#10284a;letter-spacing:0.1px;">New here? We’ve got all the projects &amp;</div>
<div class="t" style="left:1276.3px;top:858.79px;font-size:16.2px;font-weight:400;color:#10284a;letter-spacing:0.3px;">tutorials designed for beginners.</div>
<svg class="a" style="left:1584px;top:848px;" width="16" height="16" viewBox="0 0 16 16"><path d="M3.5,3.5 L12,12 M12,3.5 L3.5,12" stroke="#e6f2ff" stroke-width="1.8"/></svg>
<svg class="a" style="left:1340px;top:100px;" width="200" height="230" viewBox="0 0 200 230"><polygon transform="translate(1.8,1.8)" points="122.2,25.5 163.2,129.7 130.8,141.6 111.4,95.1 61.6,207.6 28.1,193.5 77.8,81.1 31.4,97.3 17.3,64.9" fill="#7c7c7c" opacity="0.8"/><polygon points="122.2,25.5 163.2,129.7 130.8,141.6 111.4,95.1 61.6,207.6 28.1,193.5 77.8,81.1 31.4,97.3 17.3,64.9" fill="#9e5e08"/></svg>
<svg class="a" style="left:1410px;top:925px;" width="190" height="92" viewBox="0 0 190 92"><text x="17.5" y="30.6" transform="rotate(-90 17.5 30.6)" font-family="Liberation Sans" font-size="8.5" fill="#8797b5">the</text><text x="18.8" y="30" font-family="Liberation Sans" font-size="25.7" fill="#3f4f74" stroke="#3f4f74" stroke-width="0.5" letter-spacing="-1.05">BEARDED</text><text x="9.8" y="53.8" transform="translate(0,53.8) scale(1,1.12) translate(0,-53.8)" font-family="Liberation Sans" font-weight="700" font-size="26.6" fill="#a6660f" letter-spacing="0.1">HOUSEWIFE</text><path d="M150.5,56.6 C153,64 157,70 163,73 C166,74.6 170,74.8 173,73.5 C177,71 178.5,66 178.5,61 C178.5,57 178,54 177.6,52 C176.5,56 175.5,59.5 173.5,61.5 C172,59.5 169,58.8 166,59.2 C162,59.8 159.5,62 157.5,62.8 C155,61.5 152.5,59.5 150.5,56.6 Z" fill="#111"/><ellipse cx="168.3" cy="64.6" rx="4.3" ry="2.1" fill="#fff"/></svg>


</body></html>
